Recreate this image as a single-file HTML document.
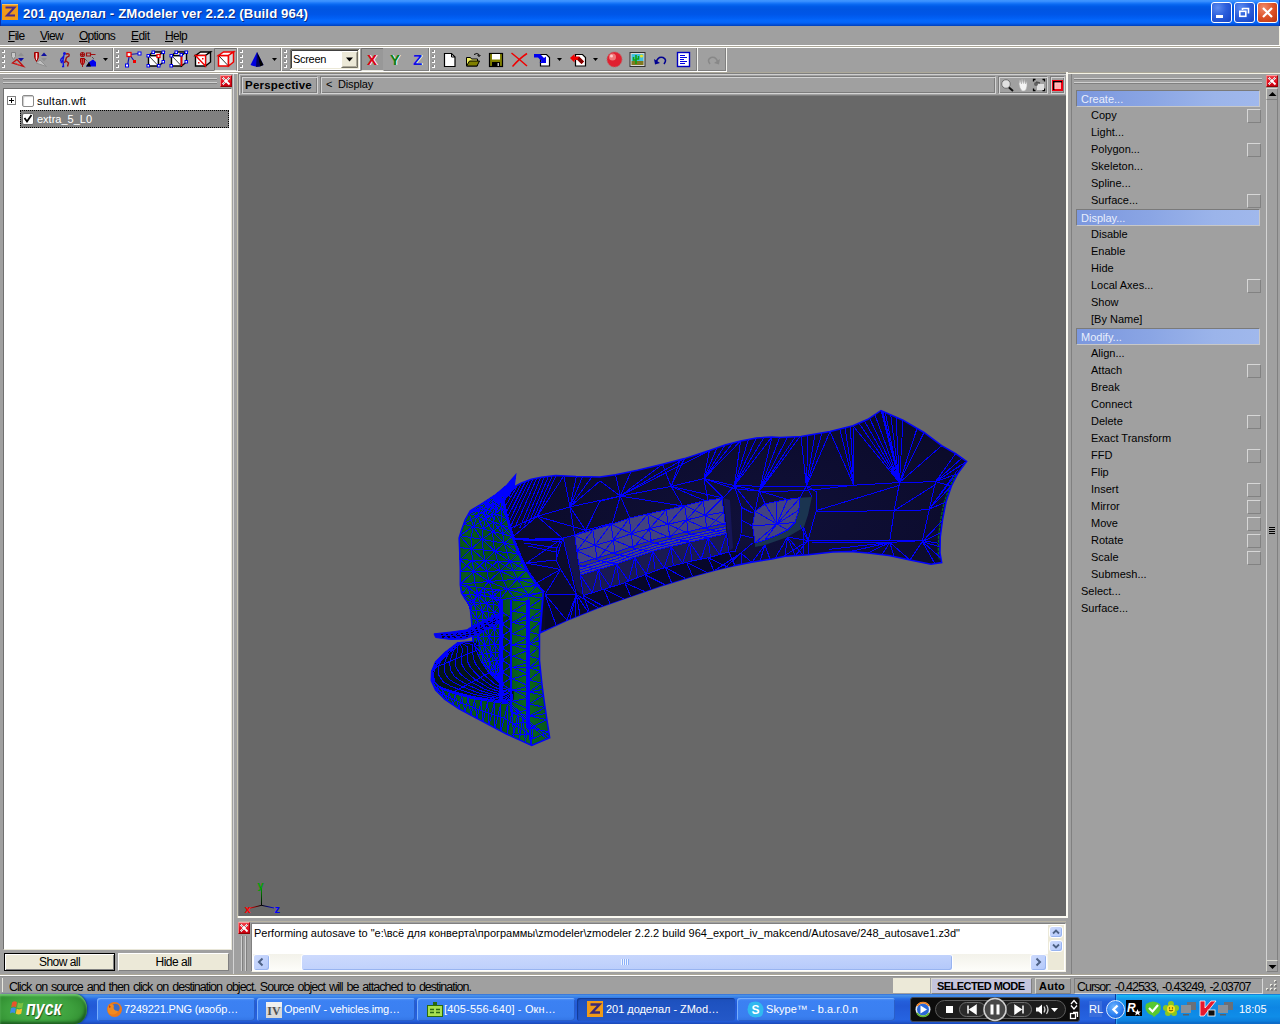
<!DOCTYPE html>
<html lang="ru">
<head>
<meta charset="utf-8">
<title>201 доделал - ZModeler ver 2.2.2 (Build 964)</title>
<style>
*{box-sizing:border-box;margin:0;padding:0}
html,body{width:1280px;height:1024px;overflow:hidden;background:#a0a0a0}
body{position:relative;font-family:"Liberation Sans","DejaVu Sans",sans-serif;font-size:11px;color:#000}
.abs,.a{position:absolute}
.a{display:block}
#titlebar{left:0;top:0;width:1280px;height:26px;border-left:1px solid #0a2fa8;border-right:1px solid #0a2fa8;background:linear-gradient(to bottom,#3f96ff 0%,#3a90ff 5%,#1d7afa 11%,#0766f0 18%,#0059e6 26%,#0055e2 36%,#0056e8 55%,#015ef3 68%,#0468fd 80%,#0463f6 88%,#0150da 94%,#0040b8 100%)}
#titletext{left:23px;top:5px;color:#fff;font-weight:bold;font-size:13.2px;text-shadow:1px 1px 0 #0a2a80;white-space:nowrap;line-height:17px}
.tbtn{position:absolute;top:2px;width:21px;height:21px;border:1px solid #fff;border-radius:3px;background:radial-gradient(circle at 30% 25%,#5d8cf0 0%,#2c5fdc 45%,#1442c4 100%)}
.tbtn.close{background:radial-gradient(circle at 30% 25%,#f08a6a 0%,#dd5227 50%,#b73311 100%)}
.menu{position:absolute;top:29px;font-size:12px;line-height:14px;white-space:nowrap}
.hl{position:absolute;height:1px;left:0;width:1280px}
.grip{position:absolute;width:3px;height:22px;top:49px}
.grip i{position:absolute;left:0;width:2px;height:2px;background:#e8e8e0;box-shadow:1px 1px 0 #707070}
.tsep{position:absolute;top:48px;width:2px;height:24px;border-left:1px solid #808080;border-right:1px solid #e0e0d8}
.sunk{border:1px solid;border-color:#808080 #d8d8d0 #d8d8d0 #808080}
.etch{border:1px solid;border-color:#7c7c7c #d4d4d4 #d4d4d4 #7c7c7c;box-shadow:inset 1px 1px 0 #d4d4d4, inset -1px -1px 0 #7c7c7c}
.rais{border:1px solid;border-color:#d8d8d0 #808080 #808080 #d8d8d0}
.t11{font-size:11px;line-height:13px;white-space:nowrap}
.t12{font-size:12px;line-height:14px;white-space:nowrap}
.xbtn{position:absolute;width:12px;height:12px;background:linear-gradient(to bottom,#f04048 0%,#e41020 55%,#c80010 100%);border:1px solid;border-color:#f8a0a0 #a00008 #900000 #f08080}
.cmdhead{position:absolute;left:1076px;width:184px;height:17px;padding-top:1px;border:1px solid;border-color:#7a7a7a #c8c8c8 #c8c8c8 #7a7a7a;background:linear-gradient(to right,#7b97de 0%,#8aa5e4 40%,#9bb4ea 75%,#a0b8ec 100%);color:#e8eefc;font-size:11px;line-height:14px;padding-left:4px}
.cmd{position:absolute;left:1091px;font-size:11px;line-height:13px;white-space:nowrap}
.cbox{position:absolute;left:1247px;width:14px;height:14px;border:1px solid;border-color:#d6d6d6 #828282 #828282 #d6d6d6}
.task{position:absolute;top:998px;height:23px;border-radius:3px;background:linear-gradient(to bottom,#5a9af8 0%,#3c81f3 12%,#3a7ff0 80%,#3374e4 100%);box-shadow:inset 1px 1px 0 #78aefc, inset -1px -1px 0 #2a5fc8;color:#fff;font-size:11px;line-height:23px;white-space:nowrap;overflow:hidden}
.task span{position:absolute;left:27px;top:0}
.task.active{background:linear-gradient(to bottom,#1c4fb8 0%,#1e52c0 20%,#2458c8 100%);box-shadow:inset 1px 1px 1px #123a94}
.sbtn{border:1px solid #fff;border-radius:3px;background:linear-gradient(to bottom right,#cddafd 0%,#c1d2fc 50%,#b3c8fa 100%);box-shadow:inset -1px -1px 0 #98b4f0}
/*FIT*/#titletext{letter-spacing:0.123px}#mFile{letter-spacing:-0.715px}#mView{letter-spacing:-0.703px}#mOptions{letter-spacing:-0.768px}#mEdit{letter-spacing:-0.551px}#mHelp{letter-spacing:-0.672px}#sultan{letter-spacing:0.253px}#extra{letter-spacing:-0.005px}#showall{letter-spacing:-0.545px}#hideall{letter-spacing:-0.504px}#persp{letter-spacing:0.220px}#disp{letter-spacing:-0.161px}#screen{letter-spacing:-0.310px}#msg{letter-spacing:-0.006px}#stat{letter-spacing:-0.983px}#selmode{letter-spacing:-0.556px}#auto{letter-spacing:0.238px}#cursor{letter-spacing:-1.039px}#tk1{letter-spacing:-0.160px}#tk2{letter-spacing:-0.119px}#tk3{letter-spacing:0.164px}#tk4{letter-spacing:-0.039px}#tk5{letter-spacing:0.049px}#clock{letter-spacing:-0.006px}/*ENDFIT*/
</style>
</head>
<body>
<div id="titlebar" class="abs"></div>
<div id="titletext" class="abs">201 доделал - ZModeler ver 2.2.2 (Build 964)</div>
<!-- app icon -->
<svg class="a" style="left:2px;top:4px" width="17" height="17" viewBox="0 0 17 17"><rect x="0" y="0" width="16" height="16" fill="#f09a18"/><rect x="0" y="0" width="16" height="1" fill="#f8c060"/><path d="M3.5 3.5 H12.5 L5 11.5 H13" fill="none" stroke="#4a2a88" stroke-width="2"/></svg>
<!-- title buttons -->
<div class="tbtn" style="left:1211px"><svg class="a" style="left:0;top:0" width="19" height="19"><rect x="4" y="12" width="7" height="3" fill="#fff"/></svg></div>
<div class="tbtn" style="left:1234px"><svg class="a" style="left:0;top:0" width="19" height="19"><path d="M7.5 5.5 H13.5 V10.5 M7.5 5 V7" fill="none" stroke="#fff" stroke-width="1.6"/><rect x="4.8" y="8.3" width="6" height="5" fill="none" stroke="#fff" stroke-width="1.6"/></svg></div>
<div class="tbtn close" style="left:1257px"><svg class="a" style="left:0;top:0" width="19" height="19"><path d="M5 5 L14 14 M14 5 L5 14" stroke="#fff" stroke-width="2.2" fill="none"/></svg></div>
<!-- window right border -->
<div class="a" style="left:1279px;top:26px;width:1px;height:19px;background:#f4f2e4"></div>
<!-- menu -->
<div class="menu" id="mFile" style="left:8px"><u>F</u>ile</div>
<div class="menu" id="mView" style="left:40px"><u>V</u>iew</div>
<div class="menu" id="mOptions" style="left:79px"><u>O</u>ptions</div>
<div class="menu" id="mEdit" style="left:131px"><u>E</u>dit</div>
<div class="menu" id="mHelp" style="left:165px"><u>H</u>elp</div>
<!-- toolbar separators -->
<div class="hl" style="top:45px;background:#fff"></div>
<div class="hl" style="top:46px;background:#aca899"></div>
<div class="hl" style="top:47px;background:#fff"></div>
<div class="hl" style="top:70px;width:726px;background:#808080"></div>
<div class="hl" style="top:71px;width:727px;background:#fff"></div>
<div class="hl" style="top:72px;background:#aca899"></div>
<div class="hl" style="top:73px;background:#fff"></div>
<!-- toolbar -->
<svg class="a" style="left:0;top:47px" width="760" height="25" viewBox="0 47 760 25" shape-rendering="crispEdges">
<rect x="2" y="50" width="3" height="3" fill="#ffffff"/><rect x="2" y="50" width="2" height="2" fill="#8c8c8c"/><rect x="2" y="55" width="3" height="3" fill="#ffffff"/><rect x="2" y="55" width="2" height="2" fill="#8c8c8c"/><rect x="2" y="60" width="3" height="3" fill="#ffffff"/><rect x="2" y="60" width="2" height="2" fill="#8c8c8c"/><rect x="2" y="65" width="3" height="3" fill="#ffffff"/><rect x="2" y="65" width="2" height="2" fill="#8c8c8c"/>
<rect x="116" y="50" width="3" height="3" fill="#ffffff"/><rect x="116" y="50" width="2" height="2" fill="#8c8c8c"/><rect x="116" y="55" width="3" height="3" fill="#ffffff"/><rect x="116" y="55" width="2" height="2" fill="#8c8c8c"/><rect x="116" y="60" width="3" height="3" fill="#ffffff"/><rect x="116" y="60" width="2" height="2" fill="#8c8c8c"/><rect x="116" y="65" width="3" height="3" fill="#ffffff"/><rect x="116" y="65" width="2" height="2" fill="#8c8c8c"/>
<rect x="240" y="50" width="3" height="3" fill="#ffffff"/><rect x="240" y="50" width="2" height="2" fill="#8c8c8c"/><rect x="240" y="55" width="3" height="3" fill="#ffffff"/><rect x="240" y="55" width="2" height="2" fill="#8c8c8c"/><rect x="240" y="60" width="3" height="3" fill="#ffffff"/><rect x="240" y="60" width="2" height="2" fill="#8c8c8c"/><rect x="240" y="65" width="3" height="3" fill="#ffffff"/><rect x="240" y="65" width="2" height="2" fill="#8c8c8c"/>
<rect x="284" y="50" width="3" height="3" fill="#ffffff"/><rect x="284" y="50" width="2" height="2" fill="#8c8c8c"/><rect x="284" y="55" width="3" height="3" fill="#ffffff"/><rect x="284" y="55" width="2" height="2" fill="#8c8c8c"/><rect x="284" y="60" width="3" height="3" fill="#ffffff"/><rect x="284" y="60" width="2" height="2" fill="#8c8c8c"/><rect x="284" y="65" width="3" height="3" fill="#ffffff"/><rect x="284" y="65" width="2" height="2" fill="#8c8c8c"/>
<rect x="432" y="50" width="3" height="3" fill="#ffffff"/><rect x="432" y="50" width="2" height="2" fill="#8c8c8c"/><rect x="432" y="55" width="3" height="3" fill="#ffffff"/><rect x="432" y="55" width="2" height="2" fill="#8c8c8c"/><rect x="432" y="60" width="3" height="3" fill="#ffffff"/><rect x="432" y="60" width="2" height="2" fill="#8c8c8c"/><rect x="432" y="65" width="3" height="3" fill="#ffffff"/><rect x="432" y="65" width="2" height="2" fill="#8c8c8c"/>
<rect x="112" y="48" width="1" height="22" fill="#808080"/><rect x="113" y="48" width="1" height="23" fill="#f4f4f0"/>
<rect x="236" y="48" width="1" height="22" fill="#808080"/><rect x="237" y="48" width="1" height="23" fill="#f4f4f0"/>
<rect x="280" y="48" width="1" height="22" fill="#808080"/><rect x="281" y="48" width="1" height="23" fill="#f4f4f0"/>
<rect x="428" y="48" width="1" height="22" fill="#808080"/><rect x="429" y="48" width="1" height="23" fill="#f4f4f0"/>
<rect x="696" y="48" width="1" height="22" fill="#808080"/><rect x="697" y="48" width="1" height="23" fill="#f4f4f0"/>
<rect x="725" y="48" width="1" height="22" fill="#808080"/><rect x="726" y="48" width="1" height="23" fill="#f4f4f0"/>
<path d="M103 58 h5 l-2.500 3z" fill="#000" shape-rendering="auto"/>
<path d="M272 58 h5 l-2.500 3z" fill="#000" shape-rendering="auto"/>
<path d="M557 58 h5 l-2.500 3z" fill="#000" shape-rendering="auto"/>
<path d="M593 58 h5 l-2.500 3z" fill="#000" shape-rendering="auto"/>
<g shape-rendering="auto">
<g><path d="M11.500 52.500 h4 v4 l-2 3 l-2 -3z" fill="#c8c8c8" stroke="#808080"/><path d="M18 56 l3 -3.500 l3 3.500z" fill="#909090"/><path d="M18 58 l3 3.500 l3 -3.500z" fill="#1010a0"/><path d="M12.500 63 L17 59.500 L23.500 66.500 Z" fill="none" stroke="#c01010" stroke-width="1.300"/><path d="M15 63 L20 65.500" stroke="#e03030" stroke-width="1"/></g>
<g><path d="M34.500 52.500 h4 v5 l-2 4 l-2 -4z" fill="#d04040" stroke="#a00000"/><path d="M36.500 53 v7" stroke="#fff" stroke-width="0.800"/><path d="M41 56 l3 -3.500 l3 3.500z" fill="#1010a0"/><path d="M41 58 l3 3.500 l3 -3.500z" fill="#909090"/><path d="M36 63 L40 60 L46.500 66.500 Z" fill="#c0c0c0" stroke="#909090"/></g>
<g fill="none"><circle cx="64.500" cy="53.500" r="1.500" fill="#1010e0"/><path d="M64 55 L63 60 L61 63 M63 60 L63.500 66.500 H62 M64 56 L61 59 L60.500 61.500" stroke="#1010e0" stroke-width="1.400"/><path d="M66 54 Q70 53 69 56 L66.500 57.500 L65.500 60.500 L68.500 63 L67.500 66.500 M65.500 60.500 L64.500 63" stroke="#a01010" stroke-width="1.400"/></g>
<g><circle cx="82.500" cy="54.500" r="2" fill="none" stroke="#a01010" stroke-width="1.200"/><path d="M80.500 54.500 h4 M82.500 52.500 v4" stroke="#a01010"/><path d="M86.500 53 h4 v3 h-4z M90.500 54.500 h5" fill="none" stroke="#a01010" stroke-width="1.200"/><path d="M80.500 58.500 h4 v4 l-2 3 l-2 -3z" fill="#d04040" stroke="#a00000"/><path d="M82.500 59 v8" stroke="#a01010"/><path d="M86 66.500 L89 62 L93 59.500 L96 62 V66.500Z" fill="#0000f0"/><path d="M86 66.500 L89 62 L91 66.500Z" fill="#000"/><path d="M85 59 L89 63 M92 57 L94 59" stroke="#303030" stroke-dasharray="1 1"/></g>
<g><path d="M127.500 65.500 L129.500 54.500 L139.500 53.500 M129.500 54.500 L134.500 61.500" fill="none" stroke="#1010b0" stroke-width="1.200"/><rect x="127" y="52.500" width="4" height="4" fill="#fff" stroke="#f00000" stroke-width="1.300"/><rect x="133" y="60" width="3" height="3" fill="#f00000"/><rect x="138" y="52" width="3" height="3" fill="#fff" stroke="#0000f0"/><rect x="125.500" y="64" width="3" height="3" fill="#fff" stroke="#0000f0"/></g>
<g><path d="M148.5 55.5 h10 v10.500 h-10z" fill="#fff" stroke="#000" stroke-width="1.4"/><path d="M148.5 55.5 l5 -3.500 h10 l-5 3.500z" fill="#fff" stroke="#000" stroke-width="1.4"/><path d="M158.5 55.5 l5 -3.500 v10 l-5 4z" fill="#d8d8d8" stroke="#000" stroke-width="1.4"/><path d="M149 56 L158 65.500" stroke="#404040"/><rect x="147" y="54.5" width="2.500" height="2.500" fill="#fff" stroke="#0000f0"/><rect x="152" y="51" width="2.500" height="2.500" fill="#fff" stroke="#0000f0"/><rect x="162" y="51" width="2.500" height="2.500" fill="#fff" stroke="#0000f0"/><rect x="162" y="60.5" width="2.500" height="2.500" fill="#fff" stroke="#0000f0"/><rect x="157.5" y="64.5" width="2.500" height="2.500" fill="#fff" stroke="#0000f0"/><rect x="147" y="64.5" width="2.500" height="2.500" fill="#fff" stroke="#0000f0"/><rect x="157" y="54.500" width="3" height="3" fill="#fff" stroke="#f00000" stroke-width="1.300"/></g>
<g><path d="M171.5 55.5 h10 v10.500 h-10z" fill="#fff" stroke="#000" stroke-width="1.4"/><path d="M171.5 55.5 l5 -3.500 h10 l-5 3.500z" fill="#fff" stroke="#000" stroke-width="1.4"/><path d="M181.5 55.5 l5 -3.500 v10 l-5 4z" fill="#d8d8d8" stroke="#000" stroke-width="1.4"/><path d="M172 56 L181 65.500" stroke="#404040"/><path d="M181.500 55 V66" stroke="#f00000" stroke-width="1.600"/><rect x="170" y="54.5" width="2.500" height="2.500" fill="#fff" stroke="#0000f0"/><rect x="175" y="51" width="2.500" height="2.500" fill="#fff" stroke="#0000f0"/><rect x="185" y="51" width="2.500" height="2.500" fill="#fff" stroke="#0000f0"/><rect x="185" y="60.5" width="2.500" height="2.500" fill="#fff" stroke="#0000f0"/><rect x="170" y="64.5" width="2.500" height="2.500" fill="#fff" stroke="#0000f0"/><rect x="180" y="53.5" width="2.500" height="2.500" fill="#fff" stroke="#0000f0"/></g>
<g><path d="M195.5 55.5 h10 v10.500 h-10z" fill="#fff" stroke="#000" stroke-width="1.4"/><path d="M195.5 55.5 l5 -3.500 h10 l-5 3.500z" fill="#fff" stroke="#000" stroke-width="1.4"/><path d="M205.5 55.5 l5 -3.500 v10 l-5 4z" fill="#d8d8d8" stroke="#000" stroke-width="1.4"/><path d="M195.500 55.500 L205.500 66 V55.500 Z" fill="#fff" stroke="#f00000" stroke-width="1.300"/><rect x="198" y="62" width="1.500" height="1.500" fill="#f00000"/><rect x="202" y="58" width="1.500" height="1.500" fill="#f00000"/></g>
<rect x="214" y="48" width="22" height="22" fill="#a6a6a6"/><path d="M214.500 70 V48.500 H236" fill="none" stroke="#707070"/><path d="M214.500 70.500 H236.500" fill="none" stroke="#e8e8e0"/>
<g><path d="M218.5 55.5 h10 v10.500 h-10z" fill="#fff" stroke="#f00000" stroke-width="1.5"/><path d="M218.5 55.5 l5 -3.500 h10 l-5 3.500z" fill="#fff" stroke="#f00000" stroke-width="1.5"/><path d="M228.5 55.5 l5 -3.500 v10 l-5 4z" fill="#d8d8d8" stroke="#f00000" stroke-width="1.5"/><path d="M219 56 L228 65.500" stroke="#303030"/></g>
<g><path d="M257 52 L263.500 65 Q257 68 250.500 65Z" fill="#0000e0"/><path d="M257 52 L260 66.500 L256 67Z" fill="#000060"/><path d="M257 52 L263.500 65 L260 66.500Z" fill="#000"/></g>
<rect x="290" y="49" width="70" height="21" fill="#fff"/><path d="M290.500 69 V49.500 H359" fill="none" stroke="#716f64"/><path d="M291.500 68 V50.500 H358" fill="none" stroke="#404040"/><path d="M290.500 69.500 H359.500 V49.500" fill="none" stroke="#fff"/><path d="M291.500 68.500 H358.500 V50.500" fill="none" stroke="#ece9d8"/><rect x="341" y="51" width="17" height="17" fill="#ece9d8"/><path d="M341.500 67 V51.500 H357" fill="none" stroke="#fff"/><path d="M341.500 67.500 H357.500 V51.500" fill="none" stroke="#716f64"/><path d="M342.500 66.500 H356.500 V52.500" fill="none" stroke="#aca899"/><path d="M346 57.500 h7 l-3.500 4z" fill="#000"/>
<rect x="361" y="48" width="22" height="22" fill="#989898"/><path d="M361.500 70 V48.500 H383" fill="none" stroke="#707070"/><path d="M361.500 70.500 H383.500" fill="none" stroke="#e8e8e0"/>
</g></svg>
<div class="a t11" id="screen" style="left:293px;top:53px">Screen</div>
<div class="a" style="left:367px;top:51px;font-size:15px;font-weight:bold;line-height:17px;color:#e00010;text-shadow:1px 0 0 #fff">X</div>
<div class="a" style="left:390px;top:51px;font-size:15px;font-weight:bold;line-height:17px;color:#108010;text-shadow:1px 0 0 #fff">Y</div>
<div class="a" style="left:413px;top:51px;font-size:15px;font-weight:bold;line-height:17px;color:#1010e0;text-shadow:1px 0 0 #fff">Z</div>
<svg class="a" style="left:436px;top:47px" width="300" height="25" viewBox="436 47 300 25">
<path d="M444.500 53.500 h7 l3.500 3.500 v9.500 h-10.500z" fill="#fff" stroke="#000" stroke-width="1.200"/><path d="M451.500 53.500 v3.500 h3.500" fill="none" stroke="#000"/>
<path d="M466.500 57.500 h4 l1 1.500 h6 v7 h-11z" fill="#f0f060" stroke="#000"/><path d="M466.500 66 l3 -5 h10 l-2.500 5z" fill="#808000" stroke="#000"/><path d="M474 54.500 q3 -2 5 0 l0 2 m0 0 l-1.500 -1.500 m1.500 1.500 l1.500 -1.500" fill="none" stroke="#000"/>
<rect x="489.500" y="53.500" width="13" height="13" fill="#808000" stroke="#000" stroke-width="1.200"/><rect x="492" y="54" width="8" height="5.500" fill="#fff"/><rect x="492" y="62" width="8" height="4.500" fill="#000"/><rect x="497.500" y="63" width="1.500" height="3" fill="#c0c0c0"/>
<path d="M511.500 53 Q519 59 527 66 M527 53.500 Q520 58 512.500 66.500" fill="none" stroke="#f00000" stroke-width="1.500"/>
<path d="M540.500 54.500 h6 l3 3 v8.500 h-9z" fill="#fff" stroke="#000" stroke-width="1.200"/><path d="M534 54 h6 l4 4 l2 -1.500 v6.500 h-6.500 l2 -2 l-3.500 -3.500 h-4z" fill="#0000f0"/>
<path d="M575.500 54.500 h7 l3 3 v8.500 h-10z" fill="#fff" stroke="#000" stroke-width="1.200"/><path d="M570 58 l4.500 -4 v2.500 h4.500 l5 5 l-2.500 2.500 l-4 -4 h-3 v2.500z" fill="#f00000"/><path d="M579 56.500 l5 5 l-2.500 2.500 l-4 -4z" fill="#800000"/>
<circle cx="614.500" cy="59.500" r="7.500" fill="#e02030"/><circle cx="614.500" cy="59.500" r="7.500" fill="none" stroke="#c06060" stroke-width="1" stroke-dasharray="1 1"/><circle cx="612.500" cy="57" r="3.500" fill="#f07878"/><circle cx="611.500" cy="56" r="1.500" fill="#ffc8c8"/>
<rect x="630" y="52.500" width="15" height="14" fill="#d8d8d8" stroke="#303030"/><rect x="631.500" y="54" width="12" height="7" fill="#40c0e0"/><rect x="631.500" y="61" width="12" height="4" fill="#807820"/><path d="M636 55 v9 M633.500 57 v3 h2.500 M638.500 56 v3 h-2.500" stroke="#10a010" stroke-width="1.600" fill="none"/><circle cx="641.500" cy="56" r="1.600" fill="#f0e020"/>
<path d="M656 62.500 Q658 56 663 57.500 Q667.500 59.500 664 64" fill="none" stroke="#000090" stroke-width="1.600"/><path d="M654 59 l1 5.500 l5 -1.500z" fill="#000090"/>
<rect x="677.500" y="52.500" width="12" height="14" fill="#fff" stroke="#0000c0" stroke-width="1.400"/><path d="M680 55.500 h5 M680 57.500 h7 M680 59.500 h4 M680 61.500 h7 M680 63.500 h5" stroke="#0000e0" stroke-width="1"/>
<path d="M718 62.500 Q716 56 711 57.500 Q706.500 59.500 710 64" fill="none" stroke="#888888" stroke-width="1.600"/><path d="M720 59 l-1 5.500 l-5 -1.500z" fill="#888888"/>
</svg>
<!-- left objects panel -->
<div class="a" style="left:3px;top:78px;width:214px;height:2px;border-top:1px solid #d0d0d0;border-bottom:1px solid #808080"></div>
<div class="a" style="left:3px;top:82px;width:214px;height:2px;border-top:1px solid #d0d0d0;border-bottom:1px solid #808080"></div>
<div class="xbtn" style="left:220px;top:75px"><svg class="a" style="left:0;top:0" width="10" height="10"><path d="M1.5 1.5 L8.5 8.5" stroke="#fff" stroke-width="1.8"/><path d="M8.5 1.500 L1.500 8.500" stroke="#fff" stroke-width="1.800"/><path d="M1.500 1.500 l2 2 M8.500 1.500 l-2 2 M1.500 8.500 l2 -2" stroke="#200000" stroke-width="1" stroke-dasharray="1 1"/></svg></div>
<div class="a" style="left:3px;top:88px;width:229px;height:862px;background:#fff;border:1px solid;border-color:#707070 #e8e6d8 #e8e6d8 #707070"></div>
<!-- tree -->
<div class="a" style="left:7px;top:96px;width:9px;height:9px;border:1px solid #808080;background:#fff"><div class="a" style="left:1px;top:3px;width:5px;height:1px;background:#000"></div><div class="a" style="left:3px;top:1px;width:1px;height:5px;background:#000"></div></div>
<div class="a" style="left:22px;top:95px;width:12px;height:12px;background:#fff;border:1px solid #8a8a8a;border-radius:2px;box-shadow:inset 1px 1px 1px #c8c8c8"></div>
<div class="a t11" id="sultan" style="left:37px;top:95px">sultan.wft</div>
<div class="a" style="left:20px;top:110px;width:209px;height:18px;background:#808080;outline:1px dotted #000;outline-offset:-1px"></div>
<div class="a" style="left:22px;top:113px;width:12px;height:12px;background:#fff;border:1px solid #6a6a6a;border-radius:2px"><svg class="a" style="left:0;top:0" width="10" height="10"><path d="M1.5 4 L4 7.5 L8.5 1" fill="none" stroke="#000" stroke-width="1.8"/></svg></div>
<div class="a t11" id="extra" style="left:37px;top:113px;color:#fff">extra_5_L0</div>
<!-- buttons -->
<div class="a t12" style="left:4px;top:953px;width:111px;height:18px;background:#ece9d8;border:1px solid #000;box-shadow:inset 1px 1px 0 #fff, inset -1px -1px 0 #808080;text-align:center;line-height:16px"><span id="showall">Show all</span></div>
<div class="a t12" style="left:118px;top:953px;width:111px;height:18px;background:#ece9d8;border:1px solid;border-color:#fff #808080 #808080 #fff;text-align:center;line-height:16px"><span id="hideall">Hide all</span></div>
<!-- splitter left/viewport -->
<div class="a" style="left:233px;top:74px;width:1px;height:900px;background:#d4d4d4"></div>
<div class="a" style="left:237px;top:74px;width:1px;height:844px;background:#c8c4b0"></div>
<div class="a" style="left:238px;top:74px;width:1px;height:842px;background:#808080"></div>
<!-- viewport header -->
<div class="a" style="left:238px;top:73px;width:828px;height:1px;background:#808080"></div>
<div class="a" style="left:239px;top:74px;width:827px;height:1px;background:#d0d0d0"></div>
<div class="a" style="left:239px;top:75px;width:1px;height:20px;background:#d0d0d0"></div>
<div class="a etch" style="left:241px;top:76px;width:77px;height:18px"></div>
<div class="a" id="persp" style="left:245px;top:78px;font-size:11.5px;font-weight:bold;line-height:14px;white-space:nowrap">Perspective</div>
<div class="a etch" style="left:320px;top:76px;width:676px;height:18px"></div>
<div class="a t11" id="disp" style="left:326px;top:78px">&lt;&nbsp; Display</div>
<div class="a etch" style="left:998px;top:76px;width:50px;height:18px"></div>
<div class="a etch" style="left:1050px;top:76px;width:15px;height:18px"></div>
<!-- viewport -->
<div class="a" style="left:239px;top:95px;width:827px;height:1px;background:#808080"></div>
<div class="a" style="left:239px;top:96px;width:827px;height:820px;background:#686868"></div>
<div class="a" style="left:238px;top:916px;width:830px;height:2px;background:#fbfaf2"></div>
<svg class="a" style="left:998px;top:76px" width="68" height="18" viewBox="998 76 68 18">
<circle cx="1006" cy="84" r="4.300" fill="#e0e0e0" stroke="#707070" stroke-width="1"/><path d="M1009 87.500 L1013 91" stroke="#101010" stroke-width="2"/>
<path d="M1019 84 L1020 80 L1021.500 84 L1022 79 L1023.500 83.500 L1024.500 79.500 L1025.500 84 L1027 81.500 L1027 86 Q1026.500 90 1024.500 91 H1022 Q1019.500 88 1019 84Z" fill="#f4f4f4" stroke="#b0b0b0" stroke-width="0.600"/>
<path d="M1033.500 81.500 V79.500 H1035.500 M1042.500 79.500 H1044.500 V81.500 M1044.500 88.500 V90.500 H1042.500 M1035.500 90.500 H1033.500 V88.500" fill="none" stroke="#000" stroke-width="1.300"/><rect x="1037" y="84" width="7" height="6" fill="#e0e0e0"/><circle cx="1036" cy="84" r="2" fill="#606060"/><path d="M1036 82 L1040 83" stroke="#505050" stroke-width="1.500"/>
<rect x="1052" y="80" width="11" height="11" fill="#f00010"/><rect x="1053" y="81" width="9" height="1.500" fill="#000"/><rect x="1053" y="81" width="1.500" height="9" fill="#000"/><rect x="1054.500" y="82.500" width="6.500" height="6.500" fill="#ffc8c8"/><rect x="1055.500" y="83.500" width="5.500" height="5.500" fill="#ffa0a0" opacity="0.600"/>
</svg>
<!-- axis gizmo -->
<svg class="a" style="left:240px;top:876px" width="50" height="40" viewBox="240 876 50 40">
<defs><linearGradient id="gy" x1="0" y1="1" x2="0" y2="0"><stop offset="0" stop-color="#000"/><stop offset="1" stop-color="#00a000"/></linearGradient>
<linearGradient id="gx" x1="1" y1="0" x2="0" y2="0"><stop offset="0" stop-color="#000"/><stop offset="1" stop-color="#f00000"/></linearGradient>
<linearGradient id="gz" x1="0" y1="0" x2="1" y2="0"><stop offset="0" stop-color="#000"/><stop offset="1" stop-color="#0000f0"/></linearGradient></defs>
<rect x="261" y="888" width="1" height="17.500" fill="url(#gy)"/>
<path d="M261.500 905.300 L250 908.200" stroke="url(#gx)" stroke-width="1"/>
<path d="M261.500 905.300 L274 908" stroke="url(#gz)" stroke-width="1"/>
<text x="257.500" y="889" font-family="Liberation Sans,sans-serif" font-size="11" font-weight="bold" fill="#00a000">y</text>
<text x="244.500" y="913" font-family="Liberation Sans,sans-serif" font-size="11" font-weight="bold" fill="#ff0000">x</text>
<text x="274.500" y="913" font-family="Liberation Sans,sans-serif" font-size="11" font-weight="bold" fill="#0000ff">z</text>
</svg>
<svg class="a" style="left:239px;top:96px" width="827" height="820" viewBox="239 96 827 820">
<defs><linearGradient id="gg" x1="0" y1="0" x2="1" y2="0"><stop offset="0" stop-color="#053c18"/><stop offset="0.3" stop-color="#095a1e"/><stop offset="0.55" stop-color="#06481a"/><stop offset="0.8" stop-color="#0a6620"/><stop offset="1" stop-color="#08541c"/></linearGradient><radialGradient id="nv" cx="0.55" cy="0.5" r="0.6"><stop offset="0" stop-color="#10103a"/><stop offset="1" stop-color="#0a0a28"/></radialGradient></defs>
<polygon points="515.5,475.2 506.9,485.3 494.7,495.5 480.5,504.6 470.3,510.7 465.2,519.8 461.2,531.0 459.1,538.1 459.8,553.8 460.3,569.4 460.3,585.0 461.4,592.8 465.3,599.0 470.0,605.6 471.6,621.3 473.0,641.6 457.5,643.0 445.0,652.5 435.6,661.9 431.7,671.3 431.3,680.6 435.6,690.0 445.0,699.4 459.0,708.8 482.5,721.3 506.0,733.8 531.7,745.5 549.7,737.7 545.0,707.0 541.9,683.8 539.5,660.3 539.5,632.0 543.4,592.0 535.6,583.4 526.0,569.4 520.0,556.9 513.8,541.3 509.0,525.6 505.0,511.6 502.8,499.0 514.0,487.0" fill="url(#gg)" stroke="#0000ff" stroke-width="1.5" />
<polygon points="514.0,487.0 521.0,483.3 531.3,479.2 541.4,477.2 555.6,475.5 576.0,476.5 600.0,477.0 615.6,474.7 637.5,470.3 662.5,464.2 684.4,458.6 709.4,450.5 725.0,445.0 740.6,441.0 756.3,438.0 771.9,436.9 780.0,437.4 801.0,436.6 830.0,431.6 853.0,425.8 867.9,419.3 881.0,410.5 903.0,420.2 924.0,432.5 941.7,445.7 955.7,453.6 966.6,461.5 957.5,473.8 951.4,486.0 946.0,502.0 942.6,519.5 940.3,537.0 940.0,553.0 941.7,562.6 931.0,564.3 910.0,560.0 889.0,555.5 867.9,553.0 850.3,551.5 832.7,552.0 808.0,554.7 785.0,556.3 771.9,559.0 751.6,562.2 732.8,566.0 715.6,570.0 691.9,576.6 660.6,586.0 629.4,596.9 598.0,607.8 566.9,620.3 540.3,632.8 543.4,592.0 535.6,583.4 526.0,569.4 520.0,556.9 513.8,541.3 509.0,525.6 505.0,511.6 502.8,499.0" fill="url(#nv)" stroke="#0000ff" stroke-width="1.5" />
<polygon points="477.8,641.6 479.4,658.8 488.8,672.8 499.7,683.8 513.8,690.0 513.8,699.4 507.5,701.7 490.3,699.4 471.6,696.3 451.3,690.8 440.3,686.9 433.3,680.6 431.7,671.3 435.6,661.9 445.0,652.5 457.5,643.0" fill="#03141c" />
<polygon points="502.5,617.0 510.5,615.0 510.5,690.0 512.0,699.0 502.5,686.0" fill="#053416" />
<polygon points="583.2,595.5 620.0,584.4 660.6,568.8 691.9,561.0 709.4,557.5 728.8,551.9 741.0,553.0 732.8,566.0 715.6,570.0 691.9,576.6 660.6,586.0 629.4,596.9 598.0,607.8 566.9,620.3 545.0,630.0 545.0,594.4 576.3,594.4" fill="#07072a" />
<polygon points="574.7,535.2 580.8,533.4 586.9,531.6 592.9,529.9 599.0,528.1 605.1,526.2 611.1,524.2 617.1,522.2 623.1,520.3 629.2,518.3 635.3,516.7 641.5,515.3 647.7,513.9 653.8,512.6 660.0,511.2 666.2,509.8 672.4,508.4 678.6,507.0 684.7,505.5 690.9,504.0 697.0,502.4 703.2,500.9 709.4,499.9 715.7,499.1 722.0,498.3 728.8,551.9 722.7,553.7 716.6,555.4 710.5,557.2 704.3,558.5 698.1,559.8 691.9,561.0 685.7,562.5 679.6,564.1 673.4,565.6 667.3,567.1 661.1,568.7 655.2,570.9 649.2,573.2 643.3,575.4 637.4,577.7 631.5,580.0 625.6,582.3 619.6,584.5 613.6,586.3 607.5,588.2 601.4,590.0 595.3,591.8 589.3,593.7 583.2,595.5" fill="#1a1a52" />
<polygon points="574.7,535.2 580.8,533.4 586.9,531.6 592.9,529.9 599.0,528.1 605.1,526.2 611.1,524.2 617.1,522.2 623.1,520.3 629.2,518.3 635.3,516.7 641.5,515.3 647.7,513.9 653.8,512.6 660.0,511.2 666.2,509.8 672.4,508.4 678.6,507.0 684.7,505.5 690.9,504.0 697.0,502.4 703.2,500.9 709.4,499.9 715.7,499.1 722.0,498.3 726.5,533.7 720.3,535.1 714.2,536.5 708.0,538.0 701.8,539.4 695.6,540.8 689.5,542.1 683.3,543.6 677.1,545.1 671.0,546.6 664.8,548.1 658.6,549.6 652.6,551.5 646.6,553.5 640.6,555.5 634.6,557.5 628.6,559.7 622.7,561.8 616.7,564.0 610.7,565.9 604.6,567.7 598.5,569.6 592.5,571.4 586.4,573.2 580.3,575.0" fill="#424282" />
<polygon points="578.7,563.5 584.8,561.7 590.9,559.9 596.9,558.1 603.0,556.3 609.1,554.4 615.1,552.5 621.1,550.4 627.1,548.3 633.0,546.2 639.1,544.3 645.1,542.5 651.2,540.7 657.3,538.9 663.4,537.5 669.6,536.0 675.8,534.5 681.9,533.1 688.1,531.6 694.3,530.2 700.5,528.8 706.6,527.3 712.8,526.0 719.0,524.7 725.2,523.5 725.6,526.7 719.4,528.0 713.2,529.3 707.1,530.7 700.9,532.2 694.7,533.5 688.5,534.9 682.4,536.4 676.2,537.9 670.0,539.4 663.9,540.8 657.7,542.3 651.6,544.1 645.6,546.0 639.6,547.8 633.5,549.8 627.6,551.9 621.6,554.0 615.6,556.2 609.6,558.1 603.5,559.9 597.4,561.7 591.4,563.5 585.3,565.4 579.2,567.2" fill="#37376f" />
<polygon points="563.0,538.3 574.7,535.2 582.5,595.3 576.5,590.0" fill="#14144a" />
<polygon points="723.4,498.0 730.0,500.0 733.0,548.0 729.7,551.0" fill="#161658" />
<polygon points="755.0,511.3 765.0,503.8 787.5,499.4 800.0,497.8 798.8,510.0 795.0,522.5 787.5,530.0 777.5,535.0 765.0,540.0 755.0,543.0 752.5,526.0" fill="#424282" />
<polygon points="800.0,497.8 811.9,497.0 808.0,515.0 803.8,527.5 787.5,537.0 765.0,545.0 755.0,547.0 755.0,543.0 765.0,540.0 777.5,535.0 787.5,530.0 795.0,522.5 798.8,510.0" fill="#1a3450" />
<polyline points="955.7,474.5 949.5,487.0 944.0,503.0 940.6,520.0 938.5,537.0 938.3,553.0 939.5,560.0" fill="none" stroke="#0a6a20" stroke-width="1.3" stroke-dasharray="3 1"/>
<g stroke="#0000ff" stroke-width="1" shape-rendering="crispEdges">
<line x1="620.3" y1="496.1" x2="615.6" y2="474.7"/>
<line x1="620.3" y1="496.1" x2="631.0" y2="471.6"/>
<line x1="620.3" y1="496.1" x2="662.5" y2="464.2"/>
<line x1="620.3" y1="496.1" x2="684.4" y2="458.6"/>
<line x1="620.3" y1="496.1" x2="709.4" y2="450.5"/>
<line x1="620.3" y1="496.1" x2="600.0" y2="481.0"/>
<line x1="620.3" y1="496.1" x2="600.0" y2="501.3"/>
<line x1="620.3" y1="496.1" x2="612.5" y2="523.0"/>
<line x1="620.3" y1="496.1" x2="629.7" y2="517.7"/>
<line x1="620.3" y1="496.1" x2="682.8" y2="506.0"/>
<line x1="620.3" y1="496.1" x2="671.1" y2="486.4"/>
<line x1="620.3" y1="496.1" x2="570.0" y2="506.9"/>
<line x1="600.0" y1="481.0" x2="570.0" y2="506.9"/>
<line x1="600.0" y1="501.3" x2="585.6" y2="530.3"/>
<line x1="570.0" y1="506.9" x2="585.6" y2="530.3"/>
<line x1="585.6" y1="530.3" x2="574.7" y2="535.2"/>
<line x1="612.5" y1="523.0" x2="600.0" y2="527.8"/>
<line x1="612.5" y1="523.0" x2="585.6" y2="530.3"/>
<line x1="671.1" y1="486.4" x2="684.4" y2="458.6"/>
<line x1="671.1" y1="486.4" x2="680.0" y2="459.7"/>
<line x1="671.1" y1="486.4" x2="682.8" y2="506.0"/>
<line x1="671.1" y1="486.4" x2="704.7" y2="500.5"/>
<line x1="671.1" y1="486.4" x2="723.4" y2="498.0"/>
<line x1="671.1" y1="486.4" x2="703.9" y2="478.6"/>
<line x1="671.1" y1="486.4" x2="662.5" y2="464.2"/>
<line x1="703.9" y1="478.6" x2="709.4" y2="450.5"/>
<line x1="703.9" y1="478.6" x2="717.0" y2="447.8"/>
<line x1="703.9" y1="478.6" x2="725.0" y2="445.0"/>
<line x1="703.9" y1="478.6" x2="732.8" y2="443.0"/>
<line x1="703.9" y1="478.6" x2="740.6" y2="441.0"/>
<line x1="703.9" y1="478.6" x2="707.8" y2="499.7"/>
<line x1="703.9" y1="478.6" x2="734.4" y2="488.8"/>
<line x1="703.9" y1="478.6" x2="723.4" y2="498.0"/>
<line x1="734.4" y1="485.6" x2="740.6" y2="441.0"/>
<line x1="734.4" y1="485.6" x2="748.4" y2="439.5"/>
<line x1="734.4" y1="485.6" x2="756.3" y2="438.0"/>
<line x1="734.4" y1="485.6" x2="764.0" y2="437.5"/>
<line x1="734.4" y1="485.6" x2="771.9" y2="436.9"/>
<line x1="734.4" y1="485.6" x2="741.4" y2="507.5"/>
<line x1="734.4" y1="485.6" x2="723.4" y2="498.0"/>
<line x1="734.4" y1="485.6" x2="755.0" y2="511.3"/>
<line x1="734.4" y1="485.6" x2="703.9" y2="478.6"/>
<line x1="734.4" y1="485.6" x2="759.4" y2="491.1"/>
<line x1="759.4" y1="491.1" x2="771.9" y2="436.9"/>
<line x1="759.4" y1="491.1" x2="779.7" y2="437.4"/>
<line x1="759.4" y1="491.1" x2="787.5" y2="437.1"/>
<line x1="759.4" y1="491.1" x2="795.3" y2="436.8"/>
<line x1="759.4" y1="491.1" x2="800.0" y2="436.6"/>
<line x1="759.4" y1="491.1" x2="765.0" y2="503.8"/>
<line x1="759.4" y1="491.1" x2="755.0" y2="511.3"/>
<line x1="759.4" y1="491.1" x2="787.5" y2="499.4"/>
<line x1="806.4" y1="486.1" x2="801.0" y2="436.6"/>
<line x1="806.4" y1="486.1" x2="808.0" y2="435.4"/>
<line x1="806.4" y1="486.1" x2="815.0" y2="434.2"/>
<line x1="806.4" y1="486.1" x2="822.0" y2="433.0"/>
<line x1="806.4" y1="486.1" x2="830.0" y2="431.6"/>
<line x1="806.4" y1="486.1" x2="800.0" y2="497.8"/>
<line x1="806.4" y1="486.1" x2="811.9" y2="497.0"/>
<line x1="806.4" y1="486.1" x2="816.0" y2="491.4"/>
<line x1="853.8" y1="485.2" x2="830.0" y2="431.6"/>
<line x1="853.8" y1="485.2" x2="839.8" y2="429.1"/>
<line x1="853.8" y1="485.2" x2="845.0" y2="427.8"/>
<line x1="853.8" y1="485.2" x2="850.3" y2="426.5"/>
<line x1="853.8" y1="485.2" x2="853.0" y2="425.8"/>
<line x1="899.5" y1="482.6" x2="853.0" y2="425.8"/>
<line x1="899.5" y1="482.6" x2="859.0" y2="423.2"/>
<line x1="899.5" y1="482.6" x2="864.4" y2="420.8"/>
<line x1="899.5" y1="482.6" x2="869.6" y2="418.2"/>
<line x1="899.5" y1="482.6" x2="874.9" y2="414.6"/>
<line x1="899.5" y1="482.6" x2="881.0" y2="410.5"/>
<line x1="899.5" y1="482.6" x2="882.0" y2="411.5"/>
<line x1="899.5" y1="482.6" x2="883.0" y2="412.0"/>
<line x1="899.5" y1="482.6" x2="885.4" y2="413.2"/>
<line x1="899.5" y1="482.6" x2="890.7" y2="415.0"/>
<line x1="899.5" y1="482.6" x2="896.0" y2="417.6"/>
<line x1="899.5" y1="482.6" x2="903.0" y2="420.2"/>
<line x1="899.5" y1="482.6" x2="917.0" y2="428.4"/>
<line x1="899.5" y1="482.6" x2="924.0" y2="432.5"/>
<line x1="899.5" y1="482.6" x2="941.7" y2="445.7"/>
<line x1="935.5" y1="481.7" x2="966.6" y2="461.5"/>
<line x1="935.5" y1="481.7" x2="955.7" y2="453.6"/>
<line x1="935.5" y1="481.7" x2="962.0" y2="458.0"/>
<line x1="935.5" y1="481.7" x2="957.5" y2="473.8"/>
<line x1="935.5" y1="481.7" x2="951.4" y2="486.0"/>
<line x1="935.5" y1="481.7" x2="960.0" y2="466.0"/>
<line x1="734.4" y1="488.8" x2="759.4" y2="491.1"/>
<line x1="759.4" y1="491.1" x2="780.0" y2="491.4"/>
<line x1="780.0" y1="491.4" x2="816.0" y2="489.6"/>
<line x1="816.0" y1="489.6" x2="853.8" y2="485.2"/>
<line x1="853.8" y1="485.2" x2="899.5" y2="482.6"/>
<line x1="899.5" y1="482.6" x2="935.5" y2="481.7"/>
<line x1="734.4" y1="485.0" x2="770.0" y2="487.0"/>
<line x1="770.0" y1="487.0" x2="806.4" y2="486.1"/>
<line x1="806.4" y1="486.1" x2="853.8" y2="485.2"/>
<line x1="816.0" y1="491.4" x2="816.0" y2="511.6"/>
<line x1="816.0" y1="511.6" x2="808.0" y2="540.6"/>
<line x1="816.0" y1="511.6" x2="894.2" y2="510.7"/>
<line x1="894.2" y1="510.7" x2="929.4" y2="509.8"/>
<line x1="808.0" y1="540.6" x2="889.8" y2="540.6"/>
<line x1="889.8" y1="540.6" x2="922.4" y2="540.6"/>
<line x1="922.4" y1="540.6" x2="938.0" y2="543.2"/>
<line x1="899.5" y1="482.6" x2="894.2" y2="510.7"/>
<line x1="894.2" y1="510.7" x2="889.8" y2="540.6"/>
<line x1="935.5" y1="481.7" x2="929.4" y2="509.0"/>
<line x1="929.4" y1="509.0" x2="922.4" y2="540.6"/>
<line x1="816.0" y1="510.7" x2="899.5" y2="485.2"/>
<line x1="894.2" y1="510.7" x2="935.5" y2="484.4"/>
<line x1="889.8" y1="542.4" x2="811.6" y2="542.4"/>
<line x1="889.8" y1="542.4" x2="829.0" y2="549.4"/>
<line x1="889.8" y1="542.4" x2="850.3" y2="551.5"/>
<line x1="889.8" y1="542.4" x2="867.9" y2="553.0"/>
<line x1="889.8" y1="542.4" x2="882.0" y2="554.7"/>
<line x1="889.8" y1="542.4" x2="894.0" y2="556.6"/>
<line x1="889.8" y1="542.4" x2="910.0" y2="560.0"/>
<line x1="889.8" y1="542.4" x2="922.4" y2="540.6"/>
<line x1="922.4" y1="541.5" x2="910.0" y2="560.0"/>
<line x1="922.4" y1="541.5" x2="934.7" y2="563.4"/>
<line x1="922.4" y1="541.5" x2="940.8" y2="558.0"/>
<line x1="922.4" y1="541.5" x2="941.7" y2="521.3"/>
<line x1="922.4" y1="541.5" x2="940.5" y2="533.0"/>
<line x1="922.4" y1="541.5" x2="940.0" y2="547.0"/>
<line x1="929.4" y1="509.0" x2="957.5" y2="470.3"/>
<line x1="929.4" y1="509.0" x2="951.4" y2="486.0"/>
<line x1="929.4" y1="509.0" x2="946.0" y2="502.0"/>
<line x1="929.4" y1="509.0" x2="953.0" y2="478.0"/>
<line x1="808.0" y1="540.6" x2="783.5" y2="556.4"/>
<line x1="808.0" y1="540.6" x2="808.0" y2="554.7"/>
<line x1="808.0" y1="540.6" x2="795.0" y2="556.0"/>
<line x1="808.0" y1="540.6" x2="800.0" y2="524.7"/>
<line x1="808.0" y1="540.6" x2="816.0" y2="511.6"/>
<line x1="808.0" y1="540.6" x2="787.5" y2="537.0"/>
<line x1="777.0" y1="524.0" x2="755.0" y2="511.3"/>
<line x1="777.0" y1="524.0" x2="765.0" y2="503.8"/>
<line x1="777.0" y1="524.0" x2="776.0" y2="501.0"/>
<line x1="777.0" y1="524.0" x2="787.5" y2="499.4"/>
<line x1="777.0" y1="524.0" x2="800.0" y2="497.8"/>
<line x1="777.0" y1="524.0" x2="798.8" y2="510.0"/>
<line x1="777.0" y1="524.0" x2="795.0" y2="522.5"/>
<line x1="777.0" y1="524.0" x2="787.5" y2="530.0"/>
<line x1="777.0" y1="524.0" x2="765.0" y2="540.0"/>
<line x1="777.0" y1="524.0" x2="755.0" y2="543.0"/>
<line x1="777.0" y1="524.0" x2="752.5" y2="526.0"/>
<line x1="755.0" y1="511.3" x2="765.0" y2="503.8"/>
<line x1="765.0" y1="503.8" x2="787.5" y2="499.4"/>
<line x1="787.5" y1="499.4" x2="800.0" y2="497.8"/>
<line x1="800.0" y1="497.8" x2="798.8" y2="510.0"/>
<line x1="798.8" y1="510.0" x2="795.0" y2="522.5"/>
<line x1="795.0" y1="522.5" x2="787.5" y2="530.0"/>
<line x1="787.5" y1="530.0" x2="777.5" y2="535.0"/>
<line x1="777.5" y1="535.0" x2="765.0" y2="540.0"/>
<line x1="765.0" y1="540.0" x2="755.0" y2="543.0"/>
<line x1="755.0" y1="543.0" x2="752.5" y2="526.0"/>
<line x1="752.5" y1="526.0" x2="755.0" y2="511.3"/>
<line x1="765.0" y1="545.0" x2="752.0" y2="562.1"/>
<line x1="765.0" y1="545.0" x2="760.0" y2="560.9"/>
<line x1="765.0" y1="545.0" x2="770.0" y2="559.3"/>
<line x1="787.5" y1="537.0" x2="775.0" y2="558.4"/>
<line x1="787.5" y1="537.0" x2="785.0" y2="556.3"/>
<line x1="787.5" y1="537.0" x2="795.0" y2="555.6"/>
<line x1="787.5" y1="537.0" x2="803.0" y2="555.0"/>
<line x1="803.8" y1="527.5" x2="803.0" y2="555.0"/>
<line x1="803.8" y1="527.5" x2="808.0" y2="540.6"/>
<line x1="741.4" y1="507.5" x2="741.0" y2="535.0"/>
<line x1="741.0" y1="535.0" x2="735.0" y2="552.0"/>
<line x1="735.0" y1="552.0" x2="729.7" y2="551.0"/>
<line x1="734.4" y1="485.6" x2="741.4" y2="507.5"/>
<line x1="741.4" y1="507.5" x2="752.5" y2="513.0"/>
<line x1="741.0" y1="535.0" x2="752.5" y2="538.0"/>
<line x1="741.0" y1="520.0" x2="752.5" y2="526.0"/>
<line x1="741.0" y1="553.0" x2="715.6" y2="570.0"/>
<line x1="741.0" y1="553.0" x2="725.0" y2="567.8"/>
<line x1="741.0" y1="553.0" x2="741.0" y2="564.3"/>
<line x1="741.0" y1="553.0" x2="751.6" y2="562.2"/>
<line x1="741.0" y1="553.0" x2="752.5" y2="543.0"/>
<line x1="574.7" y1="535.2" x2="580.8" y2="533.4"/>
<line x1="580.8" y1="533.4" x2="586.9" y2="531.6"/>
<line x1="586.9" y1="531.6" x2="592.9" y2="529.9"/>
<line x1="592.9" y1="529.9" x2="599.0" y2="528.1"/>
<line x1="599.0" y1="528.1" x2="605.1" y2="526.2"/>
<line x1="605.1" y1="526.2" x2="611.1" y2="524.2"/>
<line x1="611.1" y1="524.2" x2="617.1" y2="522.2"/>
<line x1="617.1" y1="522.2" x2="623.1" y2="520.3"/>
<line x1="623.1" y1="520.3" x2="629.2" y2="518.3"/>
<line x1="629.2" y1="518.3" x2="635.3" y2="516.7"/>
<line x1="635.3" y1="516.7" x2="641.5" y2="515.3"/>
<line x1="641.5" y1="515.3" x2="647.7" y2="513.9"/>
<line x1="647.7" y1="513.9" x2="653.8" y2="512.6"/>
<line x1="653.8" y1="512.6" x2="660.0" y2="511.2"/>
<line x1="660.0" y1="511.2" x2="666.2" y2="509.8"/>
<line x1="666.2" y1="509.8" x2="672.4" y2="508.4"/>
<line x1="672.4" y1="508.4" x2="678.6" y2="507.0"/>
<line x1="678.6" y1="507.0" x2="684.7" y2="505.5"/>
<line x1="684.7" y1="505.5" x2="690.9" y2="504.0"/>
<line x1="690.9" y1="504.0" x2="697.0" y2="502.4"/>
<line x1="697.0" y1="502.4" x2="703.2" y2="500.9"/>
<line x1="703.2" y1="500.9" x2="709.4" y2="499.9"/>
<line x1="709.4" y1="499.9" x2="715.7" y2="499.1"/>
<line x1="715.7" y1="499.1" x2="722.0" y2="498.3"/>
<line x1="576.9" y1="550.9" x2="583.0" y2="549.1"/>
<line x1="583.0" y1="549.1" x2="589.1" y2="547.3"/>
<line x1="589.1" y1="547.3" x2="595.1" y2="545.5"/>
<line x1="595.1" y1="545.5" x2="601.2" y2="543.7"/>
<line x1="601.2" y1="543.7" x2="607.3" y2="541.8"/>
<line x1="607.3" y1="541.8" x2="613.3" y2="539.9"/>
<line x1="613.3" y1="539.9" x2="619.3" y2="537.8"/>
<line x1="619.3" y1="537.8" x2="625.3" y2="535.8"/>
<line x1="625.3" y1="535.8" x2="631.3" y2="533.7"/>
<line x1="631.3" y1="533.7" x2="637.4" y2="532.0"/>
<line x1="637.4" y1="532.0" x2="643.5" y2="530.4"/>
<line x1="643.5" y1="530.4" x2="649.6" y2="528.7"/>
<line x1="649.6" y1="528.7" x2="655.7" y2="527.1"/>
<line x1="655.7" y1="527.1" x2="661.9" y2="525.7"/>
<line x1="661.9" y1="525.7" x2="668.1" y2="524.3"/>
<line x1="668.1" y1="524.3" x2="674.3" y2="522.8"/>
<line x1="674.3" y1="522.8" x2="680.4" y2="521.4"/>
<line x1="680.4" y1="521.4" x2="686.6" y2="519.9"/>
<line x1="686.6" y1="519.9" x2="692.8" y2="518.5"/>
<line x1="692.8" y1="518.5" x2="698.9" y2="517.0"/>
<line x1="698.9" y1="517.0" x2="705.1" y2="515.5"/>
<line x1="705.1" y1="515.5" x2="711.3" y2="514.3"/>
<line x1="711.3" y1="514.3" x2="717.5" y2="513.3"/>
<line x1="717.5" y1="513.3" x2="723.8" y2="512.2"/>
<line x1="578.7" y1="563.5" x2="584.8" y2="561.7"/>
<line x1="584.8" y1="561.7" x2="590.9" y2="559.9"/>
<line x1="590.9" y1="559.9" x2="596.9" y2="558.1"/>
<line x1="596.9" y1="558.1" x2="603.0" y2="556.3"/>
<line x1="603.0" y1="556.3" x2="609.1" y2="554.4"/>
<line x1="609.1" y1="554.4" x2="615.1" y2="552.5"/>
<line x1="615.1" y1="552.5" x2="621.1" y2="550.4"/>
<line x1="621.1" y1="550.4" x2="627.1" y2="548.3"/>
<line x1="627.1" y1="548.3" x2="633.0" y2="546.2"/>
<line x1="633.0" y1="546.2" x2="639.1" y2="544.3"/>
<line x1="639.1" y1="544.3" x2="645.1" y2="542.5"/>
<line x1="645.1" y1="542.5" x2="651.2" y2="540.7"/>
<line x1="651.2" y1="540.7" x2="657.3" y2="538.9"/>
<line x1="657.3" y1="538.9" x2="663.4" y2="537.5"/>
<line x1="663.4" y1="537.5" x2="669.6" y2="536.0"/>
<line x1="669.6" y1="536.0" x2="675.8" y2="534.5"/>
<line x1="675.8" y1="534.5" x2="681.9" y2="533.1"/>
<line x1="681.9" y1="533.1" x2="688.1" y2="531.6"/>
<line x1="688.1" y1="531.6" x2="694.3" y2="530.2"/>
<line x1="694.3" y1="530.2" x2="700.5" y2="528.8"/>
<line x1="700.5" y1="528.8" x2="706.6" y2="527.3"/>
<line x1="706.6" y1="527.3" x2="712.8" y2="526.0"/>
<line x1="712.8" y1="526.0" x2="719.0" y2="524.7"/>
<line x1="719.0" y1="524.7" x2="725.2" y2="523.5"/>
<line x1="579.2" y1="567.2" x2="585.3" y2="565.4"/>
<line x1="585.3" y1="565.4" x2="591.4" y2="563.5"/>
<line x1="591.4" y1="563.5" x2="597.4" y2="561.7"/>
<line x1="597.4" y1="561.7" x2="603.5" y2="559.9"/>
<line x1="603.5" y1="559.9" x2="609.6" y2="558.1"/>
<line x1="609.6" y1="558.1" x2="615.6" y2="556.2"/>
<line x1="615.6" y1="556.2" x2="621.6" y2="554.0"/>
<line x1="621.6" y1="554.0" x2="627.6" y2="551.9"/>
<line x1="627.6" y1="551.9" x2="633.5" y2="549.8"/>
<line x1="633.5" y1="549.8" x2="639.6" y2="547.8"/>
<line x1="639.6" y1="547.8" x2="645.6" y2="546.0"/>
<line x1="645.6" y1="546.0" x2="651.6" y2="544.1"/>
<line x1="651.6" y1="544.1" x2="657.7" y2="542.3"/>
<line x1="657.7" y1="542.3" x2="663.9" y2="540.8"/>
<line x1="663.9" y1="540.8" x2="670.0" y2="539.4"/>
<line x1="670.0" y1="539.4" x2="676.2" y2="537.9"/>
<line x1="676.2" y1="537.9" x2="682.4" y2="536.4"/>
<line x1="682.4" y1="536.4" x2="688.5" y2="534.9"/>
<line x1="688.5" y1="534.9" x2="694.7" y2="533.5"/>
<line x1="694.7" y1="533.5" x2="700.9" y2="532.2"/>
<line x1="700.9" y1="532.2" x2="707.1" y2="530.7"/>
<line x1="707.1" y1="530.7" x2="713.2" y2="529.3"/>
<line x1="713.2" y1="529.3" x2="719.4" y2="528.0"/>
<line x1="719.4" y1="528.0" x2="725.6" y2="526.7"/>
<line x1="579.6" y1="569.9" x2="585.7" y2="568.1"/>
<line x1="585.7" y1="568.1" x2="591.7" y2="566.3"/>
<line x1="591.7" y1="566.3" x2="597.8" y2="564.4"/>
<line x1="597.8" y1="564.4" x2="603.9" y2="562.6"/>
<line x1="603.9" y1="562.6" x2="610.0" y2="560.8"/>
<line x1="610.0" y1="560.8" x2="616.0" y2="558.9"/>
<line x1="616.0" y1="558.9" x2="622.0" y2="556.7"/>
<line x1="622.0" y1="556.7" x2="627.9" y2="554.6"/>
<line x1="627.9" y1="554.6" x2="633.9" y2="552.5"/>
<line x1="633.9" y1="552.5" x2="639.9" y2="550.5"/>
<line x1="639.9" y1="550.5" x2="645.9" y2="548.6"/>
<line x1="645.9" y1="548.6" x2="652.0" y2="546.7"/>
<line x1="652.0" y1="546.7" x2="658.0" y2="544.8"/>
<line x1="658.0" y1="544.8" x2="664.2" y2="543.3"/>
<line x1="664.2" y1="543.3" x2="670.4" y2="541.9"/>
<line x1="670.4" y1="541.9" x2="676.5" y2="540.4"/>
<line x1="676.5" y1="540.4" x2="682.7" y2="538.9"/>
<line x1="682.7" y1="538.9" x2="688.8" y2="537.4"/>
<line x1="688.8" y1="537.4" x2="695.0" y2="536.0"/>
<line x1="695.0" y1="536.0" x2="701.2" y2="534.7"/>
<line x1="701.2" y1="534.7" x2="707.4" y2="533.3"/>
<line x1="707.4" y1="533.3" x2="713.6" y2="531.8"/>
<line x1="713.6" y1="531.8" x2="719.7" y2="530.5"/>
<line x1="719.7" y1="530.5" x2="725.9" y2="529.1"/>
<line x1="580.0" y1="572.6" x2="586.0" y2="570.8"/>
<line x1="586.0" y1="570.8" x2="592.1" y2="569.0"/>
<line x1="592.1" y1="569.0" x2="598.2" y2="567.2"/>
<line x1="598.2" y1="567.2" x2="604.3" y2="565.3"/>
<line x1="604.3" y1="565.3" x2="610.3" y2="563.5"/>
<line x1="610.3" y1="563.5" x2="616.4" y2="561.6"/>
<line x1="616.4" y1="561.6" x2="622.4" y2="559.4"/>
<line x1="622.4" y1="559.4" x2="628.3" y2="557.3"/>
<line x1="628.3" y1="557.3" x2="634.3" y2="555.1"/>
<line x1="634.3" y1="555.1" x2="640.3" y2="553.1"/>
<line x1="640.3" y1="553.1" x2="646.3" y2="551.2"/>
<line x1="646.3" y1="551.2" x2="652.3" y2="549.2"/>
<line x1="652.3" y1="549.2" x2="658.3" y2="547.3"/>
<line x1="658.3" y1="547.3" x2="664.5" y2="545.9"/>
<line x1="664.5" y1="545.9" x2="670.7" y2="544.4"/>
<line x1="670.7" y1="544.4" x2="676.8" y2="542.9"/>
<line x1="676.8" y1="542.9" x2="683.0" y2="541.4"/>
<line x1="683.0" y1="541.4" x2="689.2" y2="539.9"/>
<line x1="689.2" y1="539.9" x2="695.4" y2="538.6"/>
<line x1="695.4" y1="538.6" x2="701.6" y2="537.2"/>
<line x1="701.6" y1="537.2" x2="707.7" y2="535.8"/>
<line x1="707.7" y1="535.8" x2="713.9" y2="534.3"/>
<line x1="713.9" y1="534.3" x2="720.0" y2="532.9"/>
<line x1="720.0" y1="532.9" x2="726.2" y2="531.5"/>
<line x1="580.3" y1="575.0" x2="586.4" y2="573.2"/>
<line x1="586.4" y1="573.2" x2="592.5" y2="571.4"/>
<line x1="592.5" y1="571.4" x2="598.5" y2="569.6"/>
<line x1="598.5" y1="569.6" x2="604.6" y2="567.7"/>
<line x1="604.6" y1="567.7" x2="610.7" y2="565.9"/>
<line x1="610.7" y1="565.9" x2="616.7" y2="564.0"/>
<line x1="616.7" y1="564.0" x2="622.7" y2="561.8"/>
<line x1="622.7" y1="561.8" x2="628.6" y2="559.7"/>
<line x1="628.6" y1="559.7" x2="634.6" y2="557.5"/>
<line x1="634.6" y1="557.5" x2="640.6" y2="555.5"/>
<line x1="640.6" y1="555.5" x2="646.6" y2="553.5"/>
<line x1="646.6" y1="553.5" x2="652.6" y2="551.5"/>
<line x1="652.6" y1="551.5" x2="658.6" y2="549.6"/>
<line x1="658.6" y1="549.6" x2="664.8" y2="548.1"/>
<line x1="664.8" y1="548.1" x2="671.0" y2="546.6"/>
<line x1="671.0" y1="546.6" x2="677.1" y2="545.1"/>
<line x1="677.1" y1="545.1" x2="683.3" y2="543.6"/>
<line x1="683.3" y1="543.6" x2="689.5" y2="542.1"/>
<line x1="689.5" y1="542.1" x2="695.6" y2="540.8"/>
<line x1="695.6" y1="540.8" x2="701.8" y2="539.4"/>
<line x1="701.8" y1="539.4" x2="708.0" y2="538.0"/>
<line x1="708.0" y1="538.0" x2="714.2" y2="536.5"/>
<line x1="714.2" y1="536.5" x2="720.3" y2="535.1"/>
<line x1="720.3" y1="535.1" x2="726.5" y2="533.7"/>
<line x1="583.2" y1="595.5" x2="589.3" y2="593.7"/>
<line x1="589.3" y1="593.7" x2="595.3" y2="591.8"/>
<line x1="595.3" y1="591.8" x2="601.4" y2="590.0"/>
<line x1="601.4" y1="590.0" x2="607.5" y2="588.2"/>
<line x1="607.5" y1="588.2" x2="613.6" y2="586.3"/>
<line x1="613.6" y1="586.3" x2="619.6" y2="584.5"/>
<line x1="619.6" y1="584.5" x2="625.6" y2="582.3"/>
<line x1="625.6" y1="582.3" x2="631.5" y2="580.0"/>
<line x1="631.5" y1="580.0" x2="637.4" y2="577.7"/>
<line x1="637.4" y1="577.7" x2="643.3" y2="575.4"/>
<line x1="643.3" y1="575.4" x2="649.2" y2="573.2"/>
<line x1="649.2" y1="573.2" x2="655.2" y2="570.9"/>
<line x1="655.2" y1="570.9" x2="661.1" y2="568.7"/>
<line x1="661.1" y1="568.7" x2="667.3" y2="567.1"/>
<line x1="667.3" y1="567.1" x2="673.4" y2="565.6"/>
<line x1="673.4" y1="565.6" x2="679.6" y2="564.1"/>
<line x1="679.6" y1="564.1" x2="685.7" y2="562.5"/>
<line x1="685.7" y1="562.5" x2="691.9" y2="561.0"/>
<line x1="691.9" y1="561.0" x2="698.1" y2="559.8"/>
<line x1="698.1" y1="559.8" x2="704.3" y2="558.5"/>
<line x1="704.3" y1="558.5" x2="710.5" y2="557.2"/>
<line x1="710.5" y1="557.2" x2="716.6" y2="555.4"/>
<line x1="716.6" y1="555.4" x2="722.7" y2="553.7"/>
<line x1="722.7" y1="553.7" x2="728.8" y2="551.9"/>
<line x1="574.7" y1="535.2" x2="576.9" y2="550.9"/>
<line x1="576.9" y1="550.9" x2="579.0" y2="565.4"/>
<line x1="580.3" y1="575.0" x2="583.2" y2="595.5"/>
<line x1="574.7" y1="535.2" x2="595.1" y2="545.5"/>
<line x1="592.9" y1="529.9" x2="576.9" y2="550.9"/>
<line x1="576.9" y1="550.9" x2="597.2" y2="559.9"/>
<line x1="580.3" y1="575.0" x2="592.3" y2="592.8"/>
<line x1="592.3" y1="592.8" x2="598.5" y2="569.6"/>
<line x1="579.0" y1="565.4" x2="598.5" y2="569.6"/>
<line x1="592.9" y1="529.9" x2="595.1" y2="545.5"/>
<line x1="595.1" y1="545.5" x2="597.2" y2="559.9"/>
<line x1="598.5" y1="569.6" x2="601.4" y2="590.0"/>
<line x1="595.1" y1="545.5" x2="611.1" y2="524.2"/>
<line x1="595.1" y1="545.5" x2="615.4" y2="554.3"/>
<line x1="613.3" y1="539.9" x2="597.2" y2="559.9"/>
<line x1="598.5" y1="569.6" x2="610.5" y2="587.3"/>
<line x1="610.5" y1="587.3" x2="616.7" y2="564.0"/>
<line x1="597.2" y1="559.9" x2="616.7" y2="564.0"/>
<line x1="611.1" y1="524.2" x2="613.3" y2="539.9"/>
<line x1="613.3" y1="539.9" x2="615.4" y2="554.3"/>
<line x1="616.7" y1="564.0" x2="619.6" y2="584.5"/>
<line x1="611.1" y1="524.2" x2="631.3" y2="533.7"/>
<line x1="629.2" y1="518.3" x2="613.3" y2="539.9"/>
<line x1="613.3" y1="539.9" x2="633.3" y2="548.0"/>
<line x1="616.7" y1="564.0" x2="628.5" y2="581.1"/>
<line x1="628.5" y1="581.1" x2="634.6" y2="557.5"/>
<line x1="615.4" y1="554.3" x2="634.6" y2="557.5"/>
<line x1="629.2" y1="518.3" x2="631.3" y2="533.7"/>
<line x1="631.3" y1="533.7" x2="633.3" y2="548.0"/>
<line x1="634.6" y1="557.5" x2="637.4" y2="577.7"/>
<line x1="631.3" y1="533.7" x2="647.7" y2="513.9"/>
<line x1="631.3" y1="533.7" x2="651.4" y2="542.4"/>
<line x1="649.6" y1="528.7" x2="633.3" y2="548.0"/>
<line x1="634.6" y1="557.5" x2="646.3" y2="574.3"/>
<line x1="646.3" y1="574.3" x2="652.6" y2="551.5"/>
<line x1="633.3" y1="548.0" x2="652.6" y2="551.5"/>
<line x1="647.7" y1="513.9" x2="649.6" y2="528.7"/>
<line x1="649.6" y1="528.7" x2="651.4" y2="542.4"/>
<line x1="652.6" y1="551.5" x2="655.2" y2="570.9"/>
<line x1="647.7" y1="513.9" x2="668.1" y2="524.3"/>
<line x1="666.2" y1="509.8" x2="649.6" y2="528.7"/>
<line x1="649.6" y1="528.7" x2="669.8" y2="537.7"/>
<line x1="652.6" y1="551.5" x2="664.2" y2="567.9"/>
<line x1="664.2" y1="567.9" x2="671.0" y2="546.6"/>
<line x1="651.4" y1="542.4" x2="671.0" y2="546.6"/>
<line x1="666.2" y1="509.8" x2="668.1" y2="524.3"/>
<line x1="668.1" y1="524.3" x2="669.8" y2="537.7"/>
<line x1="671.0" y1="546.6" x2="673.4" y2="565.6"/>
<line x1="668.1" y1="524.3" x2="684.7" y2="505.5"/>
<line x1="668.1" y1="524.3" x2="688.3" y2="533.3"/>
<line x1="686.6" y1="519.9" x2="669.8" y2="537.7"/>
<line x1="671.0" y1="546.6" x2="682.7" y2="563.3"/>
<line x1="682.7" y1="563.3" x2="689.5" y2="542.1"/>
<line x1="669.8" y1="537.7" x2="689.5" y2="542.1"/>
<line x1="684.7" y1="505.5" x2="686.6" y2="519.9"/>
<line x1="686.6" y1="519.9" x2="688.3" y2="533.3"/>
<line x1="689.5" y1="542.1" x2="691.9" y2="561.0"/>
<line x1="684.7" y1="505.5" x2="705.1" y2="515.5"/>
<line x1="703.2" y1="500.9" x2="686.6" y2="519.9"/>
<line x1="686.6" y1="519.9" x2="706.8" y2="529.0"/>
<line x1="689.5" y1="542.1" x2="701.2" y2="559.1"/>
<line x1="701.2" y1="559.1" x2="708.0" y2="538.0"/>
<line x1="688.3" y1="533.3" x2="708.0" y2="538.0"/>
<line x1="703.2" y1="500.9" x2="705.1" y2="515.5"/>
<line x1="705.1" y1="515.5" x2="706.8" y2="529.0"/>
<line x1="708.0" y1="538.0" x2="710.5" y2="557.2"/>
<line x1="705.1" y1="515.5" x2="722.0" y2="498.3"/>
<line x1="705.1" y1="515.5" x2="725.4" y2="525.1"/>
<line x1="723.8" y1="512.2" x2="706.8" y2="529.0"/>
<line x1="708.0" y1="538.0" x2="719.7" y2="554.5"/>
<line x1="719.7" y1="554.5" x2="726.5" y2="533.7"/>
<line x1="706.8" y1="529.0" x2="726.5" y2="533.7"/>
<line x1="722.0" y1="498.3" x2="723.8" y2="512.2"/>
<line x1="723.8" y1="512.2" x2="725.4" y2="525.1"/>
<line x1="726.5" y1="533.7" x2="728.8" y2="551.9"/>
<line x1="583.2" y1="595.5" x2="589.2" y2="611.3"/>
<line x1="583.2" y1="595.5" x2="603.2" y2="606.0"/>
<line x1="604.0" y1="589.2" x2="610.0" y2="603.6"/>
<line x1="604.0" y1="589.2" x2="624.0" y2="598.8"/>
<line x1="624.7" y1="582.6" x2="630.7" y2="596.4"/>
<line x1="624.7" y1="582.6" x2="644.7" y2="591.5"/>
<line x1="645.0" y1="574.8" x2="651.0" y2="589.3"/>
<line x1="645.0" y1="574.8" x2="665.0" y2="584.7"/>
<line x1="665.5" y1="567.6" x2="671.5" y2="582.7"/>
<line x1="665.5" y1="567.6" x2="685.5" y2="578.5"/>
<line x1="686.6" y1="562.3" x2="692.6" y2="576.4"/>
<line x1="686.6" y1="562.3" x2="706.6" y2="572.5"/>
<line x1="707.9" y1="557.8" x2="713.9" y2="570.5"/>
<line x1="707.9" y1="557.8" x2="727.9" y2="567.1"/>
<line x1="728.8" y1="551.9" x2="734.8" y2="565.6"/>
<line x1="728.8" y1="551.9" x2="735.0" y2="565.6"/>
<line x1="537.2" y1="516.3" x2="513.8" y2="536.0"/>
<line x1="537.2" y1="516.3" x2="556.0" y2="475.5"/>
<line x1="537.2" y1="516.3" x2="563.8" y2="475.9"/>
<line x1="537.2" y1="516.3" x2="570.0" y2="506.9"/>
<line x1="537.2" y1="516.3" x2="562.2" y2="538.1"/>
<line x1="537.2" y1="516.3" x2="585.6" y2="530.3"/>
<line x1="570.0" y1="506.9" x2="563.8" y2="475.9"/>
<line x1="570.0" y1="506.9" x2="576.3" y2="476.5"/>
<line x1="570.0" y1="506.9" x2="582.5" y2="476.6"/>
<line x1="570.0" y1="506.9" x2="592.0" y2="476.8"/>
<line x1="570.0" y1="506.9" x2="574.7" y2="535.2"/>
<line x1="513.8" y1="539.7" x2="560.6" y2="541.3"/>
<line x1="513.8" y1="538.5" x2="560.6" y2="540.0"/>
<line x1="524.0" y1="543.0" x2="557.0" y2="548.0"/>
<line x1="557.0" y1="548.0" x2="560.6" y2="541.3"/>
<line x1="528.0" y1="546.0" x2="556.0" y2="552.0"/>
<line x1="560.6" y1="541.3" x2="557.0" y2="548.0"/>
<line x1="557.0" y1="548.0" x2="556.0" y2="560.0"/>
<line x1="563.0" y1="538.1" x2="513.8" y2="539.7"/>
<line x1="563.0" y1="538.1" x2="526.3" y2="563.1"/>
<line x1="563.0" y1="538.1" x2="576.3" y2="594.4"/>
<line x1="563.0" y1="538.1" x2="556.0" y2="560.0"/>
<line x1="563.0" y1="538.1" x2="574.7" y2="535.2"/>
<line x1="526.3" y1="563.1" x2="560.6" y2="569.4"/>
<line x1="560.6" y1="569.4" x2="576.3" y2="594.4"/>
<line x1="556.0" y1="560.0" x2="526.3" y2="563.1"/>
<line x1="556.0" y1="560.0" x2="560.6" y2="569.4"/>
<line x1="535.6" y1="583.4" x2="560.6" y2="569.4"/>
<line x1="545.0" y1="594.4" x2="576.3" y2="594.4"/>
<line x1="545.0" y1="594.4" x2="560.6" y2="569.4"/>
<line x1="545.0" y1="594.4" x2="566.9" y2="620.3"/>
<line x1="576.3" y1="594.4" x2="566.9" y2="620.3"/>
<line x1="545.0" y1="594.4" x2="556.0" y2="625.0"/>
<line x1="576.3" y1="594.4" x2="570.0" y2="619.1"/>
<line x1="576.3" y1="594.4" x2="575.0" y2="617.0"/>
<line x1="576.3" y1="594.4" x2="580.0" y2="615.0"/>
<line x1="576.3" y1="594.4" x2="588.0" y2="611.8"/>
<line x1="576.3" y1="594.4" x2="598.0" y2="607.8"/>
<line x1="514.0" y1="487.0" x2="504.0" y2="501.0"/>
<line x1="517.8" y1="485.0" x2="505.4" y2="506.1"/>
<line x1="521.6" y1="483.0" x2="506.8" y2="511.1"/>
<line x1="525.5" y1="481.5" x2="508.1" y2="516.2"/>
<line x1="529.3" y1="480.0" x2="509.3" y2="521.3"/>
<line x1="533.1" y1="478.8" x2="510.6" y2="526.4"/>
<line x1="536.9" y1="478.1" x2="514.6" y2="528.0"/>
<line x1="540.7" y1="477.3" x2="519.8" y2="528.0"/>
<line x1="544.5" y1="476.8" x2="524.4" y2="525.4"/>
<line x1="548.4" y1="476.4" x2="528.9" y2="522.7"/>
<line x1="552.2" y1="475.9" x2="533.1" y2="519.6"/>
<line x1="556.0" y1="475.5" x2="537.2" y2="516.3"/>
<line x1="511.0" y1="528.0" x2="537.2" y2="516.3"/>
<line x1="515.5" y1="475.2" x2="515.2" y2="477.6"/>
<line x1="515.2" y1="477.6" x2="514.9" y2="479.9"/>
<line x1="514.9" y1="479.9" x2="514.6" y2="482.3"/>
<line x1="514.6" y1="482.3" x2="514.3" y2="484.6"/>
<line x1="514.3" y1="484.6" x2="514.0" y2="487.0"/>
<line x1="507.6" y1="484.4" x2="507.6" y2="486.3"/>
<line x1="507.6" y1="486.3" x2="507.7" y2="488.2"/>
<line x1="507.7" y1="488.2" x2="507.7" y2="490.0"/>
<line x1="507.7" y1="490.0" x2="507.7" y2="491.9"/>
<line x1="507.7" y1="491.9" x2="507.7" y2="493.7"/>
<line x1="498.4" y1="492.4" x2="499.4" y2="494.1"/>
<line x1="499.4" y1="494.1" x2="500.3" y2="495.8"/>
<line x1="500.3" y1="495.8" x2="501.3" y2="497.5"/>
<line x1="501.3" y1="497.5" x2="502.2" y2="499.2"/>
<line x1="502.2" y1="499.2" x2="503.1" y2="500.9"/>
<line x1="488.6" y1="499.4" x2="491.8" y2="501.5"/>
<line x1="491.8" y1="501.5" x2="495.0" y2="503.6"/>
<line x1="495.0" y1="503.6" x2="498.3" y2="505.8"/>
<line x1="498.3" y1="505.8" x2="501.5" y2="507.9"/>
<line x1="501.5" y1="507.9" x2="504.7" y2="510.0"/>
<line x1="478.3" y1="505.9" x2="484.1" y2="508.5"/>
<line x1="484.1" y1="508.5" x2="489.8" y2="511.1"/>
<line x1="489.8" y1="511.1" x2="495.6" y2="513.7"/>
<line x1="495.6" y1="513.7" x2="501.3" y2="516.3"/>
<line x1="501.3" y1="516.3" x2="507.1" y2="518.8"/>
<line x1="468.9" y1="513.1" x2="477.1" y2="516.1"/>
<line x1="477.1" y1="516.1" x2="485.2" y2="519.0"/>
<line x1="485.2" y1="519.0" x2="493.4" y2="521.9"/>
<line x1="493.4" y1="521.9" x2="501.5" y2="524.8"/>
<line x1="501.5" y1="524.8" x2="509.6" y2="527.7"/>
<line x1="463.7" y1="524.1" x2="473.4" y2="526.5"/>
<line x1="473.4" y1="526.5" x2="483.1" y2="529.0"/>
<line x1="483.1" y1="529.0" x2="492.9" y2="531.5"/>
<line x1="492.9" y1="531.5" x2="502.6" y2="534.0"/>
<line x1="502.6" y1="534.0" x2="512.3" y2="536.5"/>
<line x1="459.8" y1="535.6" x2="470.9" y2="537.5"/>
<line x1="470.9" y1="537.5" x2="482.0" y2="539.4"/>
<line x1="482.0" y1="539.4" x2="493.1" y2="541.3"/>
<line x1="493.1" y1="541.3" x2="504.2" y2="543.2"/>
<line x1="504.2" y1="543.2" x2="515.3" y2="545.1"/>
<line x1="459.5" y1="547.6" x2="471.4" y2="548.8"/>
<line x1="471.4" y1="548.8" x2="483.2" y2="550.0"/>
<line x1="483.2" y1="550.0" x2="495.0" y2="551.2"/>
<line x1="495.0" y1="551.2" x2="506.9" y2="552.5"/>
<line x1="506.9" y1="552.5" x2="518.7" y2="553.7"/>
<line x1="460.0" y1="559.7" x2="472.5" y2="560.2"/>
<line x1="472.5" y1="560.2" x2="485.0" y2="560.7"/>
<line x1="485.0" y1="560.7" x2="497.5" y2="561.1"/>
<line x1="497.5" y1="561.1" x2="510.0" y2="561.6"/>
<line x1="510.0" y1="561.6" x2="522.5" y2="562.0"/>
<line x1="460.3" y1="571.9" x2="473.6" y2="571.5"/>
<line x1="473.6" y1="571.5" x2="486.8" y2="571.2"/>
<line x1="486.8" y1="571.2" x2="500.1" y2="570.9"/>
<line x1="500.1" y1="570.9" x2="513.3" y2="570.6"/>
<line x1="513.3" y1="570.6" x2="526.6" y2="570.2"/>
<line x1="460.3" y1="584.0" x2="474.6" y2="582.8"/>
<line x1="474.6" y1="582.8" x2="488.9" y2="581.5"/>
<line x1="488.9" y1="581.5" x2="503.2" y2="580.3"/>
<line x1="503.2" y1="580.3" x2="517.5" y2="579.1"/>
<line x1="517.5" y1="579.1" x2="531.8" y2="577.8"/>
<line x1="463.1" y1="595.6" x2="478.0" y2="593.5"/>
<line x1="478.0" y1="593.5" x2="492.8" y2="591.4"/>
<line x1="492.8" y1="591.4" x2="507.6" y2="589.3"/>
<line x1="507.6" y1="589.3" x2="522.4" y2="587.3"/>
<line x1="522.4" y1="587.3" x2="537.2" y2="585.2"/>
<line x1="470.0" y1="605.6" x2="484.7" y2="602.9"/>
<line x1="484.7" y1="602.9" x2="499.4" y2="600.2"/>
<line x1="499.4" y1="600.2" x2="514.0" y2="597.4"/>
<line x1="514.0" y1="597.4" x2="528.7" y2="594.7"/>
<line x1="528.7" y1="594.7" x2="543.4" y2="592.0"/>
<line x1="515.5" y1="475.2" x2="507.6" y2="484.4"/>
<line x1="507.6" y1="484.4" x2="498.4" y2="492.4"/>
<line x1="498.4" y1="492.4" x2="488.6" y2="499.4"/>
<line x1="488.6" y1="499.4" x2="478.3" y2="505.9"/>
<line x1="478.3" y1="505.9" x2="468.9" y2="513.1"/>
<line x1="468.9" y1="513.1" x2="463.7" y2="524.1"/>
<line x1="463.7" y1="524.1" x2="459.8" y2="535.6"/>
<line x1="459.8" y1="535.6" x2="459.5" y2="547.6"/>
<line x1="459.5" y1="547.6" x2="460.0" y2="559.7"/>
<line x1="460.0" y1="559.7" x2="460.3" y2="571.9"/>
<line x1="460.3" y1="571.9" x2="460.3" y2="584.0"/>
<line x1="460.3" y1="584.0" x2="463.1" y2="595.6"/>
<line x1="463.1" y1="595.6" x2="470.0" y2="605.6"/>
<line x1="515.2" y1="477.6" x2="507.6" y2="486.3"/>
<line x1="507.6" y1="486.3" x2="499.4" y2="494.1"/>
<line x1="499.4" y1="494.1" x2="491.8" y2="501.5"/>
<line x1="491.8" y1="501.5" x2="484.1" y2="508.5"/>
<line x1="484.1" y1="508.5" x2="477.1" y2="516.1"/>
<line x1="477.1" y1="516.1" x2="473.4" y2="526.5"/>
<line x1="473.4" y1="526.5" x2="470.9" y2="537.5"/>
<line x1="470.9" y1="537.5" x2="471.4" y2="548.8"/>
<line x1="471.4" y1="548.8" x2="472.5" y2="560.2"/>
<line x1="472.5" y1="560.2" x2="473.6" y2="571.5"/>
<line x1="473.6" y1="571.5" x2="474.6" y2="582.8"/>
<line x1="474.6" y1="582.8" x2="478.0" y2="593.5"/>
<line x1="478.0" y1="593.5" x2="484.7" y2="602.9"/>
<line x1="514.9" y1="479.9" x2="507.7" y2="488.2"/>
<line x1="507.7" y1="488.2" x2="500.3" y2="495.8"/>
<line x1="500.3" y1="495.8" x2="495.0" y2="503.6"/>
<line x1="495.0" y1="503.6" x2="489.8" y2="511.1"/>
<line x1="489.8" y1="511.1" x2="485.2" y2="519.0"/>
<line x1="485.2" y1="519.0" x2="483.1" y2="529.0"/>
<line x1="483.1" y1="529.0" x2="482.0" y2="539.4"/>
<line x1="482.0" y1="539.4" x2="483.2" y2="550.0"/>
<line x1="483.2" y1="550.0" x2="485.0" y2="560.7"/>
<line x1="485.0" y1="560.7" x2="486.8" y2="571.2"/>
<line x1="486.8" y1="571.2" x2="488.9" y2="581.5"/>
<line x1="488.9" y1="581.5" x2="492.8" y2="591.4"/>
<line x1="492.8" y1="591.4" x2="499.4" y2="600.2"/>
<line x1="514.6" y1="482.3" x2="507.7" y2="490.0"/>
<line x1="507.7" y1="490.0" x2="501.3" y2="497.5"/>
<line x1="501.3" y1="497.5" x2="498.3" y2="505.8"/>
<line x1="498.3" y1="505.8" x2="495.6" y2="513.7"/>
<line x1="495.6" y1="513.7" x2="493.4" y2="521.9"/>
<line x1="493.4" y1="521.9" x2="492.9" y2="531.5"/>
<line x1="492.9" y1="531.5" x2="493.1" y2="541.3"/>
<line x1="493.1" y1="541.3" x2="495.0" y2="551.2"/>
<line x1="495.0" y1="551.2" x2="497.5" y2="561.1"/>
<line x1="497.5" y1="561.1" x2="500.1" y2="570.9"/>
<line x1="500.1" y1="570.9" x2="503.2" y2="580.3"/>
<line x1="503.2" y1="580.3" x2="507.6" y2="589.3"/>
<line x1="507.6" y1="589.3" x2="514.0" y2="597.4"/>
<line x1="514.3" y1="484.6" x2="507.7" y2="491.9"/>
<line x1="507.7" y1="491.9" x2="502.2" y2="499.2"/>
<line x1="502.2" y1="499.2" x2="501.5" y2="507.9"/>
<line x1="501.5" y1="507.9" x2="501.3" y2="516.3"/>
<line x1="501.3" y1="516.3" x2="501.5" y2="524.8"/>
<line x1="501.5" y1="524.8" x2="502.6" y2="534.0"/>
<line x1="502.6" y1="534.0" x2="504.2" y2="543.2"/>
<line x1="504.2" y1="543.2" x2="506.9" y2="552.5"/>
<line x1="506.9" y1="552.5" x2="510.0" y2="561.6"/>
<line x1="510.0" y1="561.6" x2="513.3" y2="570.6"/>
<line x1="513.3" y1="570.6" x2="517.5" y2="579.1"/>
<line x1="517.5" y1="579.1" x2="522.4" y2="587.3"/>
<line x1="522.4" y1="587.3" x2="528.7" y2="594.7"/>
<line x1="514.0" y1="487.0" x2="507.7" y2="493.7"/>
<line x1="507.7" y1="493.7" x2="503.1" y2="500.9"/>
<line x1="503.1" y1="500.9" x2="504.7" y2="510.0"/>
<line x1="504.7" y1="510.0" x2="507.1" y2="518.8"/>
<line x1="507.1" y1="518.8" x2="509.6" y2="527.7"/>
<line x1="509.6" y1="527.7" x2="512.3" y2="536.5"/>
<line x1="512.3" y1="536.5" x2="515.3" y2="545.1"/>
<line x1="515.3" y1="545.1" x2="518.7" y2="553.7"/>
<line x1="518.7" y1="553.7" x2="522.5" y2="562.0"/>
<line x1="522.5" y1="562.0" x2="526.6" y2="570.2"/>
<line x1="526.6" y1="570.2" x2="531.8" y2="577.8"/>
<line x1="531.8" y1="577.8" x2="537.2" y2="585.2"/>
<line x1="537.2" y1="585.2" x2="543.4" y2="592.0"/>
<line x1="515.2" y1="477.6" x2="507.6" y2="484.4"/>
<line x1="515.5" y1="475.2" x2="507.6" y2="486.3"/>
<line x1="515.2" y1="477.6" x2="507.6" y2="484.4"/>
<line x1="515.4" y1="476.4" x2="507.6" y2="485.4"/>
<line x1="511.6" y1="479.8" x2="511.4" y2="481.9"/>
<line x1="515.4" y1="476.4" x2="507.6" y2="484.4"/>
<line x1="515.4" y1="476.4" x2="507.6" y2="486.3"/>
<line x1="515.2" y1="477.6" x2="507.7" y2="488.2"/>
<line x1="515.2" y1="477.6" x2="507.7" y2="488.2"/>
<line x1="514.9" y1="479.9" x2="507.6" y2="486.3"/>
<line x1="515.0" y1="478.7" x2="507.7" y2="487.2"/>
<line x1="511.4" y1="481.9" x2="511.3" y2="484.0"/>
<line x1="515.0" y1="478.7" x2="507.6" y2="486.3"/>
<line x1="515.0" y1="478.7" x2="507.7" y2="488.2"/>
<line x1="514.6" y1="482.3" x2="507.7" y2="488.2"/>
<line x1="514.9" y1="479.9" x2="507.7" y2="490.0"/>
<line x1="514.6" y1="482.3" x2="507.7" y2="488.2"/>
<line x1="514.8" y1="481.1" x2="507.7" y2="489.1"/>
<line x1="511.3" y1="484.0" x2="511.1" y2="486.1"/>
<line x1="514.8" y1="481.1" x2="507.7" y2="488.2"/>
<line x1="514.8" y1="481.1" x2="507.7" y2="490.0"/>
<line x1="514.6" y1="482.3" x2="507.7" y2="491.9"/>
<line x1="514.6" y1="482.3" x2="507.7" y2="491.9"/>
<line x1="514.3" y1="484.6" x2="507.7" y2="490.0"/>
<line x1="514.0" y1="487.0" x2="507.7" y2="491.9"/>
<line x1="514.3" y1="484.6" x2="507.7" y2="493.7"/>
<line x1="514.0" y1="487.0" x2="507.7" y2="491.9"/>
<line x1="507.6" y1="484.4" x2="499.4" y2="494.1"/>
<line x1="507.6" y1="484.4" x2="499.4" y2="494.1"/>
<line x1="507.6" y1="486.3" x2="498.4" y2="492.4"/>
<line x1="507.6" y1="485.4" x2="498.9" y2="493.2"/>
<line x1="503.0" y1="488.4" x2="503.5" y2="490.2"/>
<line x1="507.6" y1="485.4" x2="498.4" y2="492.4"/>
<line x1="507.6" y1="485.4" x2="499.4" y2="494.1"/>
<line x1="507.7" y1="488.2" x2="499.4" y2="494.1"/>
<line x1="507.6" y1="486.3" x2="500.3" y2="495.8"/>
<line x1="507.7" y1="488.2" x2="499.4" y2="494.1"/>
<line x1="507.7" y1="487.2" x2="499.9" y2="494.9"/>
<line x1="503.5" y1="490.2" x2="504.0" y2="492.0"/>
<line x1="507.7" y1="487.2" x2="499.4" y2="494.1"/>
<line x1="507.7" y1="487.2" x2="500.3" y2="495.8"/>
<line x1="507.7" y1="488.2" x2="501.3" y2="497.5"/>
<line x1="507.7" y1="488.2" x2="501.3" y2="497.5"/>
<line x1="507.7" y1="490.0" x2="500.3" y2="495.8"/>
<line x1="507.7" y1="489.1" x2="500.8" y2="496.6"/>
<line x1="504.0" y1="492.0" x2="504.5" y2="493.8"/>
<line x1="507.7" y1="489.1" x2="500.3" y2="495.8"/>
<line x1="507.7" y1="489.1" x2="501.3" y2="497.5"/>
<line x1="507.7" y1="491.9" x2="501.3" y2="497.5"/>
<line x1="507.7" y1="490.0" x2="502.2" y2="499.2"/>
<line x1="507.7" y1="491.9" x2="501.3" y2="497.5"/>
<line x1="507.7" y1="491.9" x2="503.1" y2="500.9"/>
<line x1="507.7" y1="491.9" x2="503.1" y2="500.9"/>
<line x1="507.7" y1="493.7" x2="502.2" y2="499.2"/>
<line x1="499.4" y1="494.1" x2="488.6" y2="499.4"/>
<line x1="498.4" y1="492.4" x2="491.8" y2="501.5"/>
<line x1="499.4" y1="494.1" x2="488.6" y2="499.4"/>
<line x1="498.9" y1="493.2" x2="490.2" y2="500.5"/>
<line x1="493.5" y1="495.9" x2="495.6" y2="497.8"/>
<line x1="498.9" y1="493.2" x2="488.6" y2="499.4"/>
<line x1="498.9" y1="493.2" x2="491.8" y2="501.5"/>
<line x1="499.4" y1="494.1" x2="495.0" y2="503.6"/>
<line x1="499.4" y1="494.1" x2="495.0" y2="503.6"/>
<line x1="500.3" y1="495.8" x2="491.8" y2="501.5"/>
<line x1="499.9" y1="494.9" x2="493.4" y2="502.6"/>
<line x1="495.6" y1="497.8" x2="497.7" y2="499.7"/>
<line x1="499.9" y1="494.9" x2="491.8" y2="501.5"/>
<line x1="499.9" y1="494.9" x2="495.0" y2="503.6"/>
<line x1="501.3" y1="497.5" x2="495.0" y2="503.6"/>
<line x1="500.3" y1="495.8" x2="498.3" y2="505.8"/>
<line x1="501.3" y1="497.5" x2="495.0" y2="503.6"/>
<line x1="500.8" y1="496.6" x2="496.7" y2="504.7"/>
<line x1="497.7" y1="499.7" x2="499.8" y2="501.6"/>
<line x1="500.8" y1="496.6" x2="495.0" y2="503.6"/>
<line x1="500.8" y1="496.6" x2="498.3" y2="505.8"/>
<line x1="501.3" y1="497.5" x2="501.5" y2="507.9"/>
<line x1="501.3" y1="497.5" x2="501.5" y2="507.9"/>
<line x1="502.2" y1="499.2" x2="498.3" y2="505.8"/>
<line x1="503.1" y1="500.9" x2="501.5" y2="507.9"/>
<line x1="502.2" y1="499.2" x2="504.7" y2="510.0"/>
<line x1="503.1" y1="500.9" x2="501.5" y2="507.9"/>
<line x1="488.6" y1="499.4" x2="484.1" y2="508.5"/>
<line x1="490.2" y1="500.5" x2="481.2" y2="507.2"/>
<line x1="483.5" y1="502.7" x2="487.9" y2="505.0"/>
<line x1="490.2" y1="500.5" x2="478.3" y2="505.9"/>
<line x1="490.2" y1="500.5" x2="484.1" y2="508.5"/>
<line x1="495.0" y1="503.6" x2="484.1" y2="508.5"/>
<line x1="493.4" y1="502.6" x2="486.9" y2="509.8"/>
<line x1="487.9" y1="505.0" x2="492.4" y2="507.4"/>
<line x1="493.4" y1="502.6" x2="484.1" y2="508.5"/>
<line x1="493.4" y1="502.6" x2="489.8" y2="511.1"/>
<line x1="495.0" y1="503.6" x2="495.6" y2="513.7"/>
<line x1="496.7" y1="504.7" x2="492.7" y2="512.4"/>
<line x1="492.4" y1="507.4" x2="496.9" y2="509.7"/>
<line x1="496.7" y1="504.7" x2="489.8" y2="511.1"/>
<line x1="496.7" y1="504.7" x2="495.6" y2="513.7"/>
<line x1="501.5" y1="507.9" x2="495.6" y2="513.7"/>
<line x1="501.5" y1="507.9" x2="507.1" y2="518.8"/>
<line x1="484.1" y1="508.5" x2="468.9" y2="513.1"/>
<line x1="481.2" y1="507.2" x2="473.0" y2="514.6"/>
<line x1="473.6" y1="509.5" x2="480.6" y2="512.3"/>
<line x1="481.2" y1="507.2" x2="468.9" y2="513.1"/>
<line x1="481.2" y1="507.2" x2="477.1" y2="516.1"/>
<line x1="484.1" y1="508.5" x2="485.2" y2="519.0"/>
<line x1="486.9" y1="509.8" x2="481.1" y2="517.5"/>
<line x1="480.6" y1="512.3" x2="487.5" y2="515.0"/>
<line x1="486.9" y1="509.8" x2="477.1" y2="516.1"/>
<line x1="486.9" y1="509.8" x2="485.2" y2="519.0"/>
<line x1="495.6" y1="513.7" x2="485.2" y2="519.0"/>
<line x1="492.7" y1="512.4" x2="489.3" y2="520.4"/>
<line x1="487.5" y1="515.0" x2="494.5" y2="517.8"/>
<line x1="492.7" y1="512.4" x2="485.2" y2="519.0"/>
<line x1="492.7" y1="512.4" x2="493.4" y2="521.9"/>
<line x1="495.6" y1="513.7" x2="501.5" y2="524.8"/>
<line x1="507.1" y1="518.8" x2="501.5" y2="524.8"/>
<line x1="468.9" y1="513.1" x2="473.4" y2="526.5"/>
<line x1="468.9" y1="513.1" x2="473.4" y2="526.5"/>
<line x1="477.1" y1="516.1" x2="463.7" y2="524.1"/>
<line x1="485.2" y1="519.0" x2="473.4" y2="526.5"/>
<line x1="477.1" y1="516.1" x2="483.1" y2="529.0"/>
<line x1="485.2" y1="519.0" x2="473.4" y2="526.5"/>
<line x1="485.2" y1="519.0" x2="492.9" y2="531.5"/>
<line x1="485.2" y1="519.0" x2="492.9" y2="531.5"/>
<line x1="493.4" y1="521.9" x2="483.1" y2="529.0"/>
<line x1="501.5" y1="524.8" x2="492.9" y2="531.5"/>
<line x1="493.4" y1="521.9" x2="502.6" y2="534.0"/>
<line x1="501.5" y1="524.8" x2="492.9" y2="531.5"/>
<line x1="501.5" y1="524.8" x2="512.3" y2="536.5"/>
<line x1="501.5" y1="524.8" x2="512.3" y2="536.5"/>
<line x1="509.6" y1="527.7" x2="502.6" y2="534.0"/>
<line x1="473.4" y1="526.5" x2="459.8" y2="535.6"/>
<line x1="473.4" y1="526.5" x2="482.0" y2="539.4"/>
<line x1="492.9" y1="531.5" x2="482.0" y2="539.4"/>
<line x1="492.9" y1="531.5" x2="504.2" y2="543.2"/>
<line x1="512.3" y1="536.5" x2="504.2" y2="543.2"/>
<line x1="459.8" y1="535.6" x2="471.4" y2="548.8"/>
<line x1="482.0" y1="539.4" x2="471.4" y2="548.8"/>
<line x1="482.0" y1="539.4" x2="495.0" y2="551.2"/>
<line x1="504.2" y1="543.2" x2="495.0" y2="551.2"/>
<line x1="504.2" y1="543.2" x2="518.7" y2="553.7"/>
<line x1="471.4" y1="548.8" x2="460.0" y2="559.7"/>
<line x1="471.4" y1="548.8" x2="485.0" y2="560.7"/>
<line x1="495.0" y1="551.2" x2="485.0" y2="560.7"/>
<line x1="495.0" y1="551.2" x2="510.0" y2="561.6"/>
<line x1="518.7" y1="553.7" x2="510.0" y2="561.6"/>
<line x1="460.0" y1="559.7" x2="473.6" y2="571.5"/>
<line x1="460.0" y1="559.7" x2="473.6" y2="571.5"/>
<line x1="472.5" y1="560.2" x2="460.3" y2="571.9"/>
<line x1="485.0" y1="560.7" x2="473.6" y2="571.5"/>
<line x1="472.5" y1="560.2" x2="486.8" y2="571.2"/>
<line x1="485.0" y1="560.7" x2="473.6" y2="571.5"/>
<line x1="485.0" y1="560.7" x2="500.1" y2="570.9"/>
<line x1="485.0" y1="560.7" x2="500.1" y2="570.9"/>
<line x1="497.5" y1="561.1" x2="486.8" y2="571.2"/>
<line x1="510.0" y1="561.6" x2="500.1" y2="570.9"/>
<line x1="497.5" y1="561.1" x2="513.3" y2="570.6"/>
<line x1="510.0" y1="561.6" x2="500.1" y2="570.9"/>
<line x1="510.0" y1="561.6" x2="526.6" y2="570.2"/>
<line x1="510.0" y1="561.6" x2="526.6" y2="570.2"/>
<line x1="522.5" y1="562.0" x2="513.3" y2="570.6"/>
<line x1="473.6" y1="571.5" x2="460.3" y2="584.0"/>
<line x1="473.6" y1="571.5" x2="488.9" y2="581.5"/>
<line x1="500.1" y1="570.9" x2="488.9" y2="581.5"/>
<line x1="500.1" y1="570.9" x2="517.5" y2="579.1"/>
<line x1="526.6" y1="570.2" x2="517.5" y2="579.1"/>
<line x1="460.3" y1="584.0" x2="478.0" y2="593.5"/>
<line x1="488.9" y1="581.5" x2="478.0" y2="593.5"/>
<line x1="488.9" y1="581.5" x2="507.6" y2="589.3"/>
<line x1="517.5" y1="579.1" x2="507.6" y2="589.3"/>
<line x1="517.5" y1="579.1" x2="537.2" y2="585.2"/>
<line x1="478.0" y1="593.5" x2="470.0" y2="605.6"/>
<line x1="478.0" y1="593.5" x2="499.4" y2="600.2"/>
<line x1="507.6" y1="589.3" x2="499.4" y2="600.2"/>
<line x1="507.6" y1="589.3" x2="528.7" y2="594.7"/>
<line x1="537.2" y1="585.2" x2="528.7" y2="594.7"/>
<line x1="460.3" y1="585.0" x2="468.2" y2="586.0"/>
<line x1="468.2" y1="586.0" x2="476.2" y2="587.0"/>
<line x1="476.2" y1="587.0" x2="484.1" y2="588.0"/>
<line x1="484.1" y1="588.0" x2="492.1" y2="589.0"/>
<line x1="492.1" y1="589.0" x2="500.0" y2="590.0"/>
<line x1="462.1" y1="593.9" x2="469.7" y2="594.7"/>
<line x1="469.7" y1="594.7" x2="477.3" y2="595.4"/>
<line x1="477.3" y1="595.4" x2="484.8" y2="596.2"/>
<line x1="484.8" y1="596.2" x2="492.4" y2="597.0"/>
<line x1="492.4" y1="597.0" x2="500.0" y2="597.8"/>
<line x1="467.1" y1="601.6" x2="473.7" y2="602.4"/>
<line x1="473.7" y1="602.4" x2="480.3" y2="603.1"/>
<line x1="480.3" y1="603.1" x2="486.9" y2="603.9"/>
<line x1="486.9" y1="603.9" x2="493.4" y2="604.7"/>
<line x1="493.4" y1="604.7" x2="500.0" y2="605.5"/>
<line x1="470.4" y1="609.8" x2="476.3" y2="610.5"/>
<line x1="476.3" y1="610.5" x2="482.3" y2="611.2"/>
<line x1="482.3" y1="611.2" x2="488.2" y2="611.9"/>
<line x1="488.2" y1="611.9" x2="494.1" y2="612.6"/>
<line x1="494.1" y1="612.6" x2="500.0" y2="613.2"/>
<line x1="471.4" y1="618.9" x2="477.1" y2="619.4"/>
<line x1="477.1" y1="619.4" x2="482.8" y2="619.8"/>
<line x1="482.8" y1="619.8" x2="488.5" y2="620.2"/>
<line x1="488.5" y1="620.2" x2="494.3" y2="620.6"/>
<line x1="494.3" y1="620.6" x2="500.0" y2="621.0"/>
<line x1="472.1" y1="628.1" x2="477.7" y2="628.2"/>
<line x1="477.7" y1="628.2" x2="483.2" y2="628.4"/>
<line x1="483.2" y1="628.4" x2="488.8" y2="628.5"/>
<line x1="488.8" y1="628.5" x2="494.4" y2="628.6"/>
<line x1="494.4" y1="628.6" x2="500.0" y2="628.8"/>
<line x1="472.7" y1="637.2" x2="478.2" y2="637.1"/>
<line x1="478.2" y1="637.1" x2="483.6" y2="636.9"/>
<line x1="483.6" y1="636.9" x2="489.1" y2="636.8"/>
<line x1="489.1" y1="636.8" x2="494.5" y2="636.6"/>
<line x1="494.5" y1="636.6" x2="500.0" y2="636.5"/>
<line x1="474.7" y1="646.1" x2="479.7" y2="645.7"/>
<line x1="479.7" y1="645.7" x2="484.8" y2="645.4"/>
<line x1="484.8" y1="645.4" x2="489.9" y2="645.0"/>
<line x1="489.9" y1="645.0" x2="494.9" y2="644.6"/>
<line x1="494.9" y1="644.6" x2="500.0" y2="644.2"/>
<line x1="477.9" y1="654.7" x2="482.3" y2="654.2"/>
<line x1="482.3" y1="654.2" x2="486.7" y2="653.6"/>
<line x1="486.7" y1="653.6" x2="491.2" y2="653.1"/>
<line x1="491.2" y1="653.1" x2="495.6" y2="652.5"/>
<line x1="495.6" y1="652.5" x2="500.0" y2="652.0"/>
<line x1="482.1" y1="662.8" x2="485.7" y2="662.2"/>
<line x1="485.7" y1="662.2" x2="489.3" y2="661.6"/>
<line x1="489.3" y1="661.6" x2="492.8" y2="661.0"/>
<line x1="492.8" y1="661.0" x2="496.4" y2="660.4"/>
<line x1="496.4" y1="660.4" x2="500.0" y2="659.8"/>
<line x1="487.2" y1="670.4" x2="489.8" y2="669.8"/>
<line x1="489.8" y1="669.8" x2="492.3" y2="669.3"/>
<line x1="492.3" y1="669.3" x2="494.9" y2="668.7"/>
<line x1="494.9" y1="668.7" x2="497.4" y2="668.1"/>
<line x1="497.4" y1="668.1" x2="500.0" y2="667.5"/>
<line x1="493.2" y1="677.3" x2="494.6" y2="676.9"/>
<line x1="494.6" y1="676.9" x2="495.9" y2="676.5"/>
<line x1="495.9" y1="676.5" x2="497.3" y2="676.1"/>
<line x1="497.3" y1="676.1" x2="498.6" y2="675.7"/>
<line x1="498.6" y1="675.7" x2="500.0" y2="675.2"/>
<line x1="499.7" y1="683.8" x2="499.8" y2="683.6"/>
<line x1="499.8" y1="683.6" x2="499.8" y2="683.5"/>
<line x1="499.8" y1="683.5" x2="499.9" y2="683.3"/>
<line x1="499.9" y1="683.3" x2="499.9" y2="683.2"/>
<line x1="499.9" y1="683.2" x2="500.0" y2="683.0"/>
<line x1="460.3" y1="585.0" x2="462.1" y2="593.9"/>
<line x1="462.1" y1="593.9" x2="467.1" y2="601.6"/>
<line x1="467.1" y1="601.6" x2="470.4" y2="609.8"/>
<line x1="470.4" y1="609.8" x2="471.4" y2="618.9"/>
<line x1="471.4" y1="618.9" x2="472.1" y2="628.1"/>
<line x1="472.1" y1="628.1" x2="472.7" y2="637.2"/>
<line x1="472.7" y1="637.2" x2="474.7" y2="646.1"/>
<line x1="474.7" y1="646.1" x2="477.9" y2="654.7"/>
<line x1="477.9" y1="654.7" x2="482.1" y2="662.8"/>
<line x1="482.1" y1="662.8" x2="487.2" y2="670.4"/>
<line x1="487.2" y1="670.4" x2="493.2" y2="677.3"/>
<line x1="493.2" y1="677.3" x2="499.7" y2="683.8"/>
<line x1="468.2" y1="586.0" x2="469.7" y2="594.7"/>
<line x1="469.7" y1="594.7" x2="473.7" y2="602.4"/>
<line x1="473.7" y1="602.4" x2="476.3" y2="610.5"/>
<line x1="476.3" y1="610.5" x2="477.1" y2="619.4"/>
<line x1="477.1" y1="619.4" x2="477.7" y2="628.2"/>
<line x1="477.7" y1="628.2" x2="478.2" y2="637.1"/>
<line x1="478.2" y1="637.1" x2="479.7" y2="645.7"/>
<line x1="479.7" y1="645.7" x2="482.3" y2="654.2"/>
<line x1="482.3" y1="654.2" x2="485.7" y2="662.2"/>
<line x1="485.7" y1="662.2" x2="489.8" y2="669.8"/>
<line x1="489.8" y1="669.8" x2="494.6" y2="676.9"/>
<line x1="494.6" y1="676.9" x2="499.8" y2="683.6"/>
<line x1="476.2" y1="587.0" x2="477.3" y2="595.4"/>
<line x1="477.3" y1="595.4" x2="480.3" y2="603.1"/>
<line x1="480.3" y1="603.1" x2="482.3" y2="611.2"/>
<line x1="482.3" y1="611.2" x2="482.8" y2="619.8"/>
<line x1="482.8" y1="619.8" x2="483.2" y2="628.4"/>
<line x1="483.2" y1="628.4" x2="483.6" y2="636.9"/>
<line x1="483.6" y1="636.9" x2="484.8" y2="645.4"/>
<line x1="484.8" y1="645.4" x2="486.7" y2="653.6"/>
<line x1="486.7" y1="653.6" x2="489.3" y2="661.6"/>
<line x1="489.3" y1="661.6" x2="492.3" y2="669.3"/>
<line x1="492.3" y1="669.3" x2="495.9" y2="676.5"/>
<line x1="495.9" y1="676.5" x2="499.8" y2="683.5"/>
<line x1="484.1" y1="588.0" x2="484.8" y2="596.2"/>
<line x1="484.8" y1="596.2" x2="486.9" y2="603.9"/>
<line x1="486.9" y1="603.9" x2="488.2" y2="611.9"/>
<line x1="488.2" y1="611.9" x2="488.5" y2="620.2"/>
<line x1="488.5" y1="620.2" x2="488.8" y2="628.5"/>
<line x1="488.8" y1="628.5" x2="489.1" y2="636.8"/>
<line x1="489.1" y1="636.8" x2="489.9" y2="645.0"/>
<line x1="489.9" y1="645.0" x2="491.2" y2="653.1"/>
<line x1="491.2" y1="653.1" x2="492.8" y2="661.0"/>
<line x1="492.8" y1="661.0" x2="494.9" y2="668.7"/>
<line x1="494.9" y1="668.7" x2="497.3" y2="676.1"/>
<line x1="497.3" y1="676.1" x2="499.9" y2="683.3"/>
<line x1="492.1" y1="589.0" x2="492.4" y2="597.0"/>
<line x1="492.4" y1="597.0" x2="493.4" y2="604.7"/>
<line x1="493.4" y1="604.7" x2="494.1" y2="612.6"/>
<line x1="494.1" y1="612.6" x2="494.3" y2="620.6"/>
<line x1="494.3" y1="620.6" x2="494.4" y2="628.6"/>
<line x1="494.4" y1="628.6" x2="494.5" y2="636.6"/>
<line x1="494.5" y1="636.6" x2="494.9" y2="644.6"/>
<line x1="494.9" y1="644.6" x2="495.6" y2="652.5"/>
<line x1="495.6" y1="652.5" x2="496.4" y2="660.4"/>
<line x1="496.4" y1="660.4" x2="497.4" y2="668.1"/>
<line x1="497.4" y1="668.1" x2="498.6" y2="675.7"/>
<line x1="498.6" y1="675.7" x2="499.9" y2="683.2"/>
<line x1="500.0" y1="590.0" x2="500.0" y2="597.8"/>
<line x1="500.0" y1="597.8" x2="500.0" y2="605.5"/>
<line x1="500.0" y1="605.5" x2="500.0" y2="613.2"/>
<line x1="500.0" y1="613.2" x2="500.0" y2="621.0"/>
<line x1="500.0" y1="621.0" x2="500.0" y2="628.8"/>
<line x1="500.0" y1="628.8" x2="500.0" y2="636.5"/>
<line x1="500.0" y1="636.5" x2="500.0" y2="644.2"/>
<line x1="500.0" y1="644.2" x2="500.0" y2="652.0"/>
<line x1="500.0" y1="652.0" x2="500.0" y2="659.8"/>
<line x1="500.0" y1="659.8" x2="500.0" y2="667.5"/>
<line x1="500.0" y1="667.5" x2="500.0" y2="675.2"/>
<line x1="500.0" y1="675.2" x2="500.0" y2="683.0"/>
<line x1="468.2" y1="586.0" x2="462.1" y2="593.9"/>
<line x1="468.2" y1="586.0" x2="477.3" y2="595.4"/>
<line x1="484.1" y1="588.0" x2="477.3" y2="595.4"/>
<line x1="484.1" y1="588.0" x2="492.4" y2="597.0"/>
<line x1="500.0" y1="590.0" x2="492.4" y2="597.0"/>
<line x1="462.1" y1="593.9" x2="473.7" y2="602.4"/>
<line x1="477.3" y1="595.4" x2="473.7" y2="602.4"/>
<line x1="477.3" y1="595.4" x2="486.9" y2="603.9"/>
<line x1="492.4" y1="597.0" x2="486.9" y2="603.9"/>
<line x1="492.4" y1="597.0" x2="500.0" y2="605.5"/>
<line x1="473.7" y1="602.4" x2="470.4" y2="609.8"/>
<line x1="473.7" y1="602.4" x2="482.3" y2="611.2"/>
<line x1="486.9" y1="603.9" x2="482.3" y2="611.2"/>
<line x1="486.9" y1="603.9" x2="494.1" y2="612.6"/>
<line x1="500.0" y1="605.5" x2="494.1" y2="612.6"/>
<line x1="470.4" y1="609.8" x2="477.1" y2="619.4"/>
<line x1="482.3" y1="611.2" x2="477.1" y2="619.4"/>
<line x1="482.3" y1="611.2" x2="488.5" y2="620.2"/>
<line x1="494.1" y1="612.6" x2="488.5" y2="620.2"/>
<line x1="494.1" y1="612.6" x2="500.0" y2="621.0"/>
<line x1="477.1" y1="619.4" x2="472.1" y2="628.1"/>
<line x1="477.1" y1="619.4" x2="483.2" y2="628.4"/>
<line x1="488.5" y1="620.2" x2="483.2" y2="628.4"/>
<line x1="488.5" y1="620.2" x2="494.4" y2="628.6"/>
<line x1="500.0" y1="621.0" x2="494.4" y2="628.6"/>
<line x1="472.1" y1="628.1" x2="478.2" y2="637.1"/>
<line x1="483.2" y1="628.4" x2="478.2" y2="637.1"/>
<line x1="483.2" y1="628.4" x2="489.1" y2="636.8"/>
<line x1="494.4" y1="628.6" x2="489.1" y2="636.8"/>
<line x1="494.4" y1="628.6" x2="500.0" y2="636.5"/>
<line x1="478.2" y1="637.1" x2="474.7" y2="646.1"/>
<line x1="478.2" y1="637.1" x2="484.8" y2="645.4"/>
<line x1="489.1" y1="636.8" x2="484.8" y2="645.4"/>
<line x1="489.1" y1="636.8" x2="494.9" y2="644.6"/>
<line x1="500.0" y1="636.5" x2="494.9" y2="644.6"/>
<line x1="474.7" y1="646.1" x2="482.3" y2="654.2"/>
<line x1="484.8" y1="645.4" x2="482.3" y2="654.2"/>
<line x1="484.8" y1="645.4" x2="491.2" y2="653.1"/>
<line x1="494.9" y1="644.6" x2="491.2" y2="653.1"/>
<line x1="494.9" y1="644.6" x2="500.0" y2="652.0"/>
<line x1="482.3" y1="654.2" x2="482.1" y2="662.8"/>
<line x1="482.3" y1="654.2" x2="489.3" y2="661.6"/>
<line x1="491.2" y1="653.1" x2="489.3" y2="661.6"/>
<line x1="491.2" y1="653.1" x2="496.4" y2="660.4"/>
<line x1="500.0" y1="652.0" x2="496.4" y2="660.4"/>
<line x1="482.1" y1="662.8" x2="489.8" y2="669.8"/>
<line x1="489.3" y1="661.6" x2="489.8" y2="669.8"/>
<line x1="489.3" y1="661.6" x2="494.9" y2="668.7"/>
<line x1="496.4" y1="660.4" x2="494.9" y2="668.7"/>
<line x1="496.4" y1="660.4" x2="500.0" y2="667.5"/>
<line x1="489.8" y1="669.8" x2="493.2" y2="677.3"/>
<line x1="489.8" y1="669.8" x2="495.9" y2="676.5"/>
<line x1="494.9" y1="668.7" x2="495.9" y2="676.5"/>
<line x1="494.9" y1="668.7" x2="498.6" y2="675.7"/>
<line x1="500.0" y1="667.5" x2="498.6" y2="675.7"/>
<line x1="493.2" y1="677.3" x2="499.8" y2="683.6"/>
<line x1="495.9" y1="676.5" x2="499.8" y2="683.6"/>
<line x1="495.9" y1="676.5" x2="499.9" y2="683.3"/>
<line x1="498.6" y1="675.7" x2="499.9" y2="683.3"/>
<line x1="498.6" y1="675.7" x2="500.0" y2="683.0"/>
<line x1="499.0" y1="600.0" x2="499.0" y2="700.0"/>
<line x1="500.0" y1="600.0" x2="500.0" y2="701.0"/>
<line x1="501.0" y1="600.0" x2="501.0" y2="702.0"/>
<line x1="502.0" y1="600.0" x2="502.0" y2="703.0"/>
<line x1="510.5" y1="600.0" x2="510.5" y2="711.5"/>
<line x1="511.5" y1="600.0" x2="511.5" y2="712.5"/>
<line x1="526.5" y1="600.0" x2="526.5" y2="727.5"/>
<line x1="527.5" y1="600.0" x2="527.5" y2="728.5"/>
<line x1="528.5" y1="600.0" x2="528.5" y2="729.5"/>
<line x1="529.5" y1="600.0" x2="529.5" y2="730.5"/>
<line x1="512.0" y1="600.0" x2="527.8" y2="596.0"/>
<line x1="527.8" y1="596.0" x2="543.4" y2="592.0"/>
<line x1="512.5" y1="600.0" x2="528.1" y2="602.0"/>
<line x1="528.1" y1="602.0" x2="512.5" y2="611.2"/>
<line x1="528.0" y1="596.0" x2="512.5" y2="600.0"/>
<line x1="528.0" y1="596.0" x2="542.8" y2="598.1"/>
<line x1="542.8" y1="598.1" x2="528.2" y2="608.0"/>
<line x1="543.4" y1="592.0" x2="528.0" y2="596.0"/>
<line x1="512.5" y1="611.2" x2="528.2" y2="614.0"/>
<line x1="528.2" y1="614.0" x2="512.5" y2="622.5"/>
<line x1="528.2" y1="608.0" x2="541.6" y2="610.2"/>
<line x1="541.6" y1="610.2" x2="528.3" y2="620.0"/>
<line x1="512.5" y1="622.5" x2="528.4" y2="626.0"/>
<line x1="528.4" y1="626.0" x2="512.5" y2="633.8"/>
<line x1="528.3" y1="620.0" x2="512.5" y2="622.5"/>
<line x1="528.3" y1="620.0" x2="540.4" y2="622.4"/>
<line x1="540.4" y1="622.4" x2="528.5" y2="632.0"/>
<line x1="541.0" y1="616.3" x2="528.3" y2="620.0"/>
<line x1="512.5" y1="633.8" x2="528.6" y2="638.0"/>
<line x1="528.6" y1="638.0" x2="512.5" y2="645.0"/>
<line x1="528.5" y1="632.0" x2="539.5" y2="634.6"/>
<line x1="539.5" y1="634.6" x2="528.7" y2="644.0"/>
<line x1="512.5" y1="645.0" x2="528.8" y2="650.0"/>
<line x1="528.8" y1="650.0" x2="512.5" y2="656.2"/>
<line x1="528.7" y1="644.0" x2="512.5" y2="645.0"/>
<line x1="528.7" y1="644.0" x2="539.5" y2="646.8"/>
<line x1="539.5" y1="646.8" x2="528.8" y2="656.0"/>
<line x1="539.5" y1="640.7" x2="528.7" y2="644.0"/>
<line x1="512.5" y1="656.2" x2="528.9" y2="662.0"/>
<line x1="528.9" y1="662.0" x2="512.5" y2="667.5"/>
<line x1="528.8" y1="656.0" x2="539.5" y2="659.0"/>
<line x1="539.5" y1="659.0" x2="529.0" y2="668.0"/>
<line x1="512.5" y1="667.5" x2="529.1" y2="674.0"/>
<line x1="529.1" y1="674.0" x2="512.5" y2="678.8"/>
<line x1="529.0" y1="668.0" x2="512.5" y2="667.5"/>
<line x1="529.0" y1="668.0" x2="540.6" y2="671.1"/>
<line x1="540.6" y1="671.1" x2="529.2" y2="680.0"/>
<line x1="540.0" y1="665.1" x2="529.0" y2="668.0"/>
<line x1="512.5" y1="678.8" x2="529.2" y2="686.0"/>
<line x1="529.2" y1="686.0" x2="512.5" y2="690.0"/>
<line x1="529.2" y1="680.0" x2="541.8" y2="683.3"/>
<line x1="541.8" y1="683.3" x2="529.3" y2="692.0"/>
<line x1="512.5" y1="690.0" x2="529.4" y2="698.0"/>
<line x1="529.4" y1="698.0" x2="512.5" y2="701.2"/>
<line x1="529.3" y1="692.0" x2="512.5" y2="690.0"/>
<line x1="529.3" y1="692.0" x2="543.5" y2="695.4"/>
<line x1="543.5" y1="695.4" x2="529.5" y2="704.0"/>
<line x1="542.6" y1="689.4" x2="529.3" y2="692.0"/>
<line x1="512.5" y1="701.2" x2="529.6" y2="710.0"/>
<line x1="529.6" y1="710.0" x2="512.5" y2="712.5"/>
<line x1="529.5" y1="704.0" x2="545.1" y2="707.5"/>
<line x1="545.1" y1="707.5" x2="529.7" y2="716.0"/>
<line x1="512.5" y1="712.5" x2="529.8" y2="722.0"/>
<line x1="529.8" y1="722.0" x2="512.5" y2="723.8"/>
<line x1="529.7" y1="716.0" x2="512.5" y2="712.5"/>
<line x1="529.7" y1="716.0" x2="546.9" y2="719.6"/>
<line x1="546.9" y1="719.6" x2="529.8" y2="728.0"/>
<line x1="546.0" y1="713.6" x2="529.7" y2="716.0"/>
<line x1="512.5" y1="723.8" x2="529.9" y2="734.0"/>
<line x1="529.9" y1="734.0" x2="512.5" y2="735.0"/>
<line x1="529.8" y1="728.0" x2="548.8" y2="731.7"/>
<line x1="548.8" y1="731.7" x2="530.0" y2="740.0"/>
<line x1="528.0" y1="596.0" x2="530.0" y2="740.0"/>
<line x1="502.0" y1="612.0" x2="511.0" y2="618.0"/>
<line x1="511.0" y1="618.0" x2="502.0" y2="624.0"/>
<line x1="502.0" y1="624.0" x2="511.0" y2="630.0"/>
<line x1="511.0" y1="630.0" x2="502.0" y2="636.0"/>
<line x1="502.0" y1="636.0" x2="511.0" y2="642.0"/>
<line x1="511.0" y1="642.0" x2="502.0" y2="648.0"/>
<line x1="502.0" y1="648.0" x2="511.0" y2="654.0"/>
<line x1="511.0" y1="654.0" x2="502.0" y2="660.0"/>
<line x1="502.0" y1="660.0" x2="511.0" y2="666.0"/>
<line x1="511.0" y1="666.0" x2="502.0" y2="672.0"/>
<line x1="502.0" y1="672.0" x2="511.0" y2="678.0"/>
<line x1="511.0" y1="678.0" x2="502.0" y2="684.0"/>
<line x1="502.0" y1="684.0" x2="511.0" y2="690.0"/>
<line x1="511.0" y1="690.0" x2="502.0" y2="696.0"/>
<line x1="457.7" y1="642.9" x2="452.2" y2="647.7"/>
<line x1="452.2" y1="647.7" x2="446.9" y2="652.7"/>
<line x1="446.9" y1="652.7" x2="442.0" y2="658.4"/>
<line x1="442.0" y1="658.4" x2="438.5" y2="666.2"/>
<line x1="438.5" y1="666.2" x2="438.5" y2="674.7"/>
<line x1="438.5" y1="674.7" x2="443.1" y2="681.7"/>
<line x1="443.1" y1="681.7" x2="450.5" y2="686.1"/>
<line x1="450.5" y1="686.1" x2="458.5" y2="689.2"/>
<line x1="458.5" y1="689.2" x2="466.7" y2="691.9"/>
<line x1="466.7" y1="691.9" x2="475.0" y2="694.6"/>
<line x1="475.0" y1="694.6" x2="483.5" y2="696.3"/>
<line x1="483.5" y1="696.3" x2="492.1" y2="697.9"/>
<line x1="492.1" y1="697.9" x2="500.4" y2="699.5"/>
<line x1="500.4" y1="699.5" x2="508.3" y2="701.4"/>
<line x1="457.9" y1="642.8" x2="454.1" y2="646.9"/>
<line x1="454.1" y1="646.9" x2="450.5" y2="651.1"/>
<line x1="450.5" y1="651.1" x2="447.1" y2="656.2"/>
<line x1="447.1" y1="656.2" x2="444.2" y2="663.8"/>
<line x1="444.2" y1="663.8" x2="444.3" y2="672.1"/>
<line x1="444.3" y1="672.1" x2="448.6" y2="678.9"/>
<line x1="448.6" y1="678.9" x2="455.4" y2="683.4"/>
<line x1="455.4" y1="683.4" x2="462.8" y2="686.9"/>
<line x1="462.8" y1="686.9" x2="470.6" y2="689.9"/>
<line x1="470.6" y1="689.9" x2="478.3" y2="692.9"/>
<line x1="478.3" y1="692.9" x2="486.5" y2="694.8"/>
<line x1="486.5" y1="694.8" x2="494.7" y2="696.6"/>
<line x1="494.7" y1="696.6" x2="502.3" y2="698.6"/>
<line x1="502.3" y1="698.6" x2="509.1" y2="701.1"/>
<line x1="458.1" y1="642.7" x2="456.0" y2="646.1"/>
<line x1="456.0" y1="646.1" x2="454.2" y2="649.6"/>
<line x1="454.2" y1="649.6" x2="452.2" y2="653.9"/>
<line x1="452.2" y1="653.9" x2="449.9" y2="661.4"/>
<line x1="449.9" y1="661.4" x2="450.1" y2="669.4"/>
<line x1="450.1" y1="669.4" x2="454.1" y2="676.1"/>
<line x1="454.1" y1="676.1" x2="460.4" y2="680.8"/>
<line x1="460.4" y1="680.8" x2="467.2" y2="684.6"/>
<line x1="467.2" y1="684.6" x2="474.4" y2="687.9"/>
<line x1="474.4" y1="687.9" x2="481.7" y2="691.1"/>
<line x1="481.7" y1="691.1" x2="489.4" y2="693.3"/>
<line x1="489.4" y1="693.3" x2="497.3" y2="695.2"/>
<line x1="497.3" y1="695.2" x2="504.2" y2="697.6"/>
<line x1="504.2" y1="697.6" x2="509.9" y2="700.8"/>
<line x1="458.2" y1="642.6" x2="458.0" y2="645.3"/>
<line x1="458.0" y1="645.3" x2="457.8" y2="648.0"/>
<line x1="457.8" y1="648.0" x2="457.4" y2="651.7"/>
<line x1="457.4" y1="651.7" x2="455.7" y2="659.0"/>
<line x1="455.7" y1="659.0" x2="455.9" y2="666.7"/>
<line x1="455.9" y1="666.7" x2="459.6" y2="673.3"/>
<line x1="459.6" y1="673.3" x2="465.4" y2="678.1"/>
<line x1="465.4" y1="678.1" x2="471.6" y2="682.3"/>
<line x1="471.6" y1="682.3" x2="478.3" y2="685.8"/>
<line x1="478.3" y1="685.8" x2="485.0" y2="689.4"/>
<line x1="485.0" y1="689.4" x2="492.3" y2="691.8"/>
<line x1="492.3" y1="691.8" x2="499.9" y2="693.8"/>
<line x1="499.9" y1="693.8" x2="506.2" y2="696.6"/>
<line x1="506.2" y1="696.6" x2="510.6" y2="700.5"/>
<line x1="458.4" y1="642.6" x2="459.9" y2="644.5"/>
<line x1="459.9" y1="644.5" x2="461.4" y2="646.5"/>
<line x1="461.4" y1="646.5" x2="462.5" y2="649.5"/>
<line x1="462.5" y1="649.5" x2="461.4" y2="656.6"/>
<line x1="461.4" y1="656.6" x2="461.7" y2="664.0"/>
<line x1="461.7" y1="664.0" x2="465.1" y2="670.4"/>
<line x1="465.1" y1="670.4" x2="470.3" y2="675.5"/>
<line x1="470.3" y1="675.5" x2="475.9" y2="680.0"/>
<line x1="475.9" y1="680.0" x2="482.1" y2="683.8"/>
<line x1="482.1" y1="683.8" x2="488.4" y2="687.7"/>
<line x1="488.4" y1="687.7" x2="495.3" y2="690.3"/>
<line x1="495.3" y1="690.3" x2="502.5" y2="692.5"/>
<line x1="502.5" y1="692.5" x2="508.1" y2="695.6"/>
<line x1="508.1" y1="695.6" x2="511.4" y2="700.3"/>
<line x1="458.6" y1="642.5" x2="461.8" y2="643.7"/>
<line x1="461.8" y1="643.7" x2="465.1" y2="644.9"/>
<line x1="465.1" y1="644.9" x2="467.6" y2="647.2"/>
<line x1="467.6" y1="647.2" x2="467.1" y2="654.2"/>
<line x1="467.1" y1="654.2" x2="467.5" y2="661.4"/>
<line x1="467.5" y1="661.4" x2="470.6" y2="667.6"/>
<line x1="470.6" y1="667.6" x2="475.3" y2="672.8"/>
<line x1="475.3" y1="672.8" x2="480.3" y2="677.7"/>
<line x1="480.3" y1="677.7" x2="486.0" y2="681.8"/>
<line x1="486.0" y1="681.8" x2="491.7" y2="685.9"/>
<line x1="491.7" y1="685.9" x2="498.2" y2="688.8"/>
<line x1="498.2" y1="688.8" x2="505.0" y2="691.1"/>
<line x1="505.0" y1="691.1" x2="510.0" y2="694.7"/>
<line x1="510.0" y1="694.7" x2="512.2" y2="700.0"/>
<line x1="458.8" y1="642.4" x2="463.7" y2="642.9"/>
<line x1="463.7" y1="642.9" x2="468.7" y2="643.4"/>
<line x1="468.7" y1="643.4" x2="472.8" y2="645.0"/>
<line x1="472.8" y1="645.0" x2="472.8" y2="651.8"/>
<line x1="472.8" y1="651.8" x2="473.3" y2="658.7"/>
<line x1="473.3" y1="658.7" x2="476.1" y2="664.8"/>
<line x1="476.1" y1="664.8" x2="480.3" y2="670.2"/>
<line x1="480.3" y1="670.2" x2="484.7" y2="675.3"/>
<line x1="484.7" y1="675.3" x2="489.9" y2="679.8"/>
<line x1="489.9" y1="679.8" x2="495.1" y2="684.2"/>
<line x1="495.1" y1="684.2" x2="501.2" y2="687.2"/>
<line x1="501.2" y1="687.2" x2="507.6" y2="689.8"/>
<line x1="507.6" y1="689.8" x2="511.9" y2="693.7"/>
<line x1="511.9" y1="693.7" x2="513.0" y2="699.7"/>
<line x1="457.5" y1="643.0" x2="459.0" y2="642.3"/>
<line x1="432.8" y1="668.6" x2="478.5" y2="649.4"/>
<line x1="454.1" y1="691.6" x2="489.0" y2="673.0"/>
<line x1="489.5" y1="699.3" x2="510.2" y2="688.4"/>
<line x1="507.5" y1="701.7" x2="490.3" y2="699.4"/>
<line x1="490.3" y1="699.4" x2="471.6" y2="696.3"/>
<line x1="471.6" y1="696.3" x2="451.3" y2="690.8"/>
<line x1="451.3" y1="690.8" x2="440.3" y2="686.9"/>
<line x1="440.3" y1="686.9" x2="433.3" y2="680.6"/>
<line x1="433.3" y1="680.6" x2="431.7" y2="671.3"/>
<line x1="431.7" y1="671.3" x2="435.6" y2="661.9"/>
<line x1="435.6" y1="661.9" x2="445.0" y2="652.5"/>
<line x1="445.0" y1="652.5" x2="457.5" y2="643.0"/>
<line x1="508.3" y1="702.9" x2="491.1" y2="700.6"/>
<line x1="491.1" y1="700.6" x2="472.4" y2="697.5"/>
<line x1="472.4" y1="697.5" x2="452.1" y2="692.0"/>
<line x1="452.1" y1="692.0" x2="441.1" y2="688.1"/>
<line x1="441.1" y1="688.1" x2="434.1" y2="681.8"/>
<line x1="434.1" y1="681.8" x2="432.5" y2="672.5"/>
<line x1="432.5" y1="672.5" x2="436.4" y2="663.1"/>
<line x1="436.4" y1="663.1" x2="445.8" y2="653.7"/>
<line x1="445.8" y1="653.7" x2="458.3" y2="644.2"/>
<line x1="509.0" y1="704.1" x2="491.8" y2="701.8"/>
<line x1="491.8" y1="701.8" x2="473.1" y2="698.7"/>
<line x1="473.1" y1="698.7" x2="452.8" y2="693.2"/>
<line x1="452.8" y1="693.2" x2="441.8" y2="689.3"/>
<line x1="441.8" y1="689.3" x2="434.8" y2="683.0"/>
<line x1="434.8" y1="683.0" x2="433.2" y2="673.7"/>
<line x1="433.2" y1="673.7" x2="437.1" y2="664.3"/>
<line x1="437.1" y1="664.3" x2="446.5" y2="654.9"/>
<line x1="446.5" y1="654.9" x2="459.0" y2="645.4"/>
<line x1="507.5" y1="701.7" x2="520.0" y2="712.0"/>
<line x1="520.0" y1="712.0" x2="532.5" y2="724.4"/>
<line x1="532.5" y1="724.4" x2="549.7" y2="737.7"/>
<line x1="507.5" y1="703.5" x2="520.0" y2="714.0"/>
<line x1="520.0" y1="714.0" x2="532.5" y2="726.4"/>
<line x1="532.5" y1="726.4" x2="547.0" y2="739.0"/>
<line x1="431.7" y1="675.0" x2="431.3" y2="680.6"/>
<line x1="433.0" y1="681.5" x2="434.1" y2="686.8"/>
<line x1="431.7" y1="675.0" x2="434.1" y2="686.8"/>
<line x1="437.1" y1="686.5" x2="437.9" y2="692.3"/>
<line x1="433.0" y1="681.5" x2="437.9" y2="692.3"/>
<line x1="442.5" y1="690.3" x2="442.7" y2="697.1"/>
<line x1="437.1" y1="686.5" x2="442.7" y2="697.1"/>
<line x1="448.8" y1="692.6" x2="447.9" y2="701.3"/>
<line x1="442.5" y1="690.3" x2="447.9" y2="701.3"/>
<line x1="455.1" y1="694.5" x2="453.5" y2="705.1"/>
<line x1="448.8" y1="692.6" x2="453.5" y2="705.1"/>
<line x1="461.6" y1="696.3" x2="459.1" y2="708.9"/>
<line x1="455.1" y1="694.5" x2="459.1" y2="708.9"/>
<line x1="468.0" y1="698.0" x2="465.1" y2="712.1"/>
<line x1="461.6" y1="696.3" x2="465.1" y2="712.1"/>
<line x1="474.5" y1="699.5" x2="471.1" y2="715.2"/>
<line x1="468.0" y1="698.0" x2="471.1" y2="715.2"/>
<line x1="481.1" y1="700.8" x2="477.1" y2="718.4"/>
<line x1="474.5" y1="699.5" x2="477.1" y2="718.4"/>
<line x1="487.6" y1="702.0" x2="483.1" y2="721.6"/>
<line x1="481.1" y1="700.8" x2="483.1" y2="721.6"/>
<line x1="494.2" y1="703.1" x2="489.1" y2="724.8"/>
<line x1="487.6" y1="702.0" x2="489.1" y2="724.8"/>
<line x1="500.8" y1="704.0" x2="495.0" y2="728.0"/>
<line x1="494.2" y1="703.1" x2="495.0" y2="728.0"/>
<line x1="507.5" y1="705.0" x2="501.0" y2="731.2"/>
<line x1="500.8" y1="704.0" x2="501.0" y2="731.2"/>
<line x1="512.7" y1="709.1" x2="507.0" y2="734.3"/>
<line x1="507.5" y1="705.0" x2="507.0" y2="734.3"/>
<line x1="517.9" y1="713.3" x2="513.2" y2="737.1"/>
<line x1="512.7" y1="709.1" x2="513.2" y2="737.1"/>
<line x1="522.9" y1="717.8" x2="519.4" y2="739.9"/>
<line x1="517.9" y1="713.3" x2="519.4" y2="739.9"/>
<line x1="527.7" y1="722.4" x2="525.5" y2="742.7"/>
<line x1="522.9" y1="717.8" x2="525.5" y2="742.7"/>
<line x1="532.5" y1="727.0" x2="531.7" y2="745.5"/>
<line x1="527.7" y1="722.4" x2="531.7" y2="745.5"/>
<line x1="531.7" y1="745.5" x2="532.5" y2="727.0"/>
<line x1="531.7" y1="745.5" x2="528.0" y2="700.0"/>
<line x1="530.5" y1="745.0" x2="527.0" y2="700.0"/>
<line x1="431.5" y1="677.8" x2="433.6" y2="684.2"/>
<line x1="433.6" y1="684.2" x2="437.5" y2="689.4"/>
<line x1="437.5" y1="689.4" x2="442.6" y2="693.7"/>
<line x1="442.6" y1="693.7" x2="448.3" y2="697.0"/>
<line x1="448.3" y1="697.0" x2="454.3" y2="699.8"/>
<line x1="454.3" y1="699.8" x2="460.4" y2="702.6"/>
<line x1="460.4" y1="702.6" x2="466.6" y2="705.0"/>
<line x1="466.6" y1="705.0" x2="472.8" y2="707.4"/>
<line x1="472.8" y1="707.4" x2="479.1" y2="709.6"/>
<line x1="479.1" y1="709.6" x2="485.4" y2="711.8"/>
<line x1="485.4" y1="711.8" x2="491.6" y2="713.9"/>
<line x1="491.6" y1="713.9" x2="497.9" y2="716.0"/>
<line x1="497.9" y1="716.0" x2="504.2" y2="718.1"/>
<line x1="504.2" y1="718.1" x2="509.9" y2="721.7"/>
<line x1="509.9" y1="721.7" x2="515.5" y2="725.2"/>
<line x1="515.5" y1="725.2" x2="521.1" y2="728.8"/>
<line x1="521.1" y1="728.8" x2="526.6" y2="732.5"/>
<line x1="526.6" y1="732.5" x2="532.1" y2="736.2"/>
<line x1="515.5" y1="475.2" x2="506.0" y2="492.0"/>
<line x1="515.5" y1="475.2" x2="509.0" y2="497.0"/>
<line x1="515.5" y1="475.2" x2="502.8" y2="499.0"/>
<line x1="514.5" y1="478.0" x2="504.0" y2="501.0"/>
<line x1="503.5" y1="499.0" x2="505.7" y2="511.6"/>
<line x1="505.7" y1="511.6" x2="509.7" y2="525.6"/>
<line x1="509.7" y1="525.6" x2="514.5" y2="541.3"/>
<line x1="514.5" y1="541.3" x2="520.7" y2="556.9"/>
<line x1="520.7" y1="556.9" x2="526.7" y2="569.4"/>
<line x1="526.7" y1="569.4" x2="536.3" y2="583.4"/>
<line x1="536.3" y1="583.4" x2="544.1" y2="592.0"/>
<line x1="503.5" y1="499.0" x2="514.7" y2="487.0"/>
<line x1="504.2" y1="499.0" x2="506.4" y2="511.6"/>
<line x1="506.4" y1="511.6" x2="510.4" y2="525.6"/>
<line x1="510.4" y1="525.6" x2="515.2" y2="541.3"/>
<line x1="515.2" y1="541.3" x2="521.4" y2="556.9"/>
<line x1="521.4" y1="556.9" x2="527.4" y2="569.4"/>
<line x1="527.4" y1="569.4" x2="537.0" y2="583.4"/>
<line x1="537.0" y1="583.4" x2="544.8" y2="592.0"/>
<line x1="504.2" y1="499.0" x2="515.4" y2="487.0"/>
</g>
<polygon points="434.0,633.8 451.0,632.0 466.9,629.8 472.0,626.4 485.0,620.0 498.6,613.7 498.6,622.5 479.0,634.2 464.4,639.0 451.0,639.5 435.6,637.5" fill="#0202ee" stroke="#0000ff" stroke-width="1" />
<polyline points="441.3,634.9 444.7,634.8 448.1,634.8 451.5,634.6 454.9,634.3 458.3,633.9 461.7,633.6 465.0,633.1 468.2,632.1 471.2,630.5 474.3,629.0 477.4,627.6 480.4,626.1 483.4,624.5 486.5,622.9 489.5,621.4 492.5,619.9 495.6,618.3 498.6,616.8" fill="none" stroke="#06061c" stroke-width="1" stroke-dasharray="2 3" shape-rendering="crispEdges"/>
<polyline points="441.7,636.2 445.1,636.4 448.4,636.5 451.8,636.5 455.2,636.2 458.5,635.9 461.9,635.7 465.3,635.2 468.4,634.2 471.5,632.8 474.6,631.5 477.8,630.2 480.8,628.7 483.7,627.1 486.7,625.4 489.7,623.8 492.6,622.2 495.6,620.6 498.6,619.0" fill="none" stroke="#06061c" stroke-width="1" stroke-dasharray="3 2" shape-rendering="crispEdges"/>
<polyline points="442.0,637.3 445.3,637.6 448.7,637.9 452.0,638.0 455.4,637.8 458.8,637.6 462.1,637.4 465.4,636.9 468.6,635.9 471.7,634.6 474.9,633.5 478.1,632.3 481.0,630.8 484.0,629.1 486.9,627.4 489.8,625.7 492.7,624.1 495.7,622.4 498.6,620.7" fill="none" stroke="#06061c" stroke-width="1" stroke-dasharray="2 4" shape-rendering="crispEdges"/>
</svg>
<!-- right command panel -->
<div class="a" style="left:1066px;top:72px;width:2px;height:846px;background:#fbfaf2"></div>
<div class="a" style="left:1071px;top:74px;width:1px;height:900px;background:#808080"></div>
<div class="a" style="left:1068px;top:73px;width:212px;height:1px;background:#f4f2e6"></div>
<div class="a" style="left:1074px;top:78px;width:188px;height:2px;border-top:1px solid #d0d0d0;border-bottom:1px solid #808080"></div>
<div class="a" style="left:1074px;top:82px;width:188px;height:2px;border-top:1px solid #d0d0d0;border-bottom:1px solid #808080"></div>
<div class="xbtn" style="left:1266px;top:75px"><svg class="a" style="left:0;top:0" width="10" height="10"><path d="M1.5 1.5 L8.5 8.5" stroke="#fff" stroke-width="1.8"/><path d="M8.5 1.500 L1.500 8.500" stroke="#fff" stroke-width="1.800"/><path d="M1.500 1.500 l2 2 M8.500 1.500 l-2 2 M1.500 8.500 l2 -2" stroke="#200000" stroke-width="1" stroke-dasharray="1 1"/></svg></div>
<div class="cmdhead" style="top:90px">Create...</div>
<div class="cmd" style="top:109px">Copy</div>
<div class="cbox" style="top:109px"></div>
<div class="cmd" style="top:126px">Light...</div>
<div class="cmd" style="top:143px">Polygon...</div>
<div class="cbox" style="top:143px"></div>
<div class="cmd" style="top:160px">Skeleton...</div>
<div class="cmd" style="top:177px">Spline...</div>
<div class="cmd" style="top:194px">Surface...</div>
<div class="cbox" style="top:194px"></div>
<div class="cmdhead" style="top:209px">Display...</div>
<div class="cmd" style="top:228px">Disable</div>
<div class="cmd" style="top:245px">Enable</div>
<div class="cmd" style="top:262px">Hide</div>
<div class="cmd" style="top:279px">Local Axes...</div>
<div class="cbox" style="top:279px"></div>
<div class="cmd" style="top:296px">Show</div>
<div class="cmd" style="top:313px">[By Name]</div>
<div class="cmdhead" style="top:328px">Modify...</div>
<div class="cmd" style="top:347px">Align...</div>
<div class="cmd" style="top:364px">Attach</div>
<div class="cbox" style="top:364px"></div>
<div class="cmd" style="top:381px">Break</div>
<div class="cmd" style="top:398px">Connect</div>
<div class="cmd" style="top:415px">Delete</div>
<div class="cbox" style="top:415px"></div>
<div class="cmd" style="top:432px">Exact Transform</div>
<div class="cmd" style="top:449px">FFD</div>
<div class="cbox" style="top:449px"></div>
<div class="cmd" style="top:466px">Flip</div>
<div class="cmd" style="top:483px">Insert</div>
<div class="cbox" style="top:483px"></div>
<div class="cmd" style="top:500px">Mirror</div>
<div class="cbox" style="top:500px"></div>
<div class="cmd" style="top:517px">Move</div>
<div class="cbox" style="top:517px"></div>
<div class="cmd" style="top:534px">Rotate</div>
<div class="cbox" style="top:534px"></div>
<div class="cmd" style="top:551px">Scale</div>
<div class="cbox" style="top:551px"></div>
<div class="cmd" style="top:568px">Submesh...</div>
<div class="cmd" style="left:1081px;top:585px">Select...</div>
<div class="cmd" style="left:1081px;top:602px">Surface...</div>
<div class="a" style="left:1266px;top:100px;width:1px;height:860px;background:#d4d4d4"></div>
<div class="a" style="left:1277px;top:88px;width:1px;height:884px;background:#808080"></div>
<div class="a rais" style="left:1266px;top:88px;width:12px;height:12px"><svg class="a" style="left:1px;top:2px" width="9" height="6"><path d="M0.5 5 L4.5 1 L8.5 5 Z" fill="#000"/></svg></div>
<div class="a rais" style="left:1266px;top:960px;width:12px;height:12px"><svg class="a" style="left:1px;top:3px" width="9" height="6"><path d="M0.5 1 L4.5 5 L8.5 1 Z" fill="#000"/></svg></div>
<div class="a" style="left:1269px;top:527px;width:6px;height:7px;background:repeating-linear-gradient(to bottom,#000 0,#000 1px,transparent 1px,transparent 2px)"></div>
<!-- message panel -->
<div class="a" style="left:239px;top:921px;width:827px;height:1px;background:#b8b4a4"></div>
<div class="xbtn" style="left:238px;top:922px"><svg class="a" style="left:0;top:0" width="10" height="10"><path d="M1.5 1.5 L8.5 8.5" stroke="#fff" stroke-width="1.8"/><path d="M8.5 1.500 L1.500 8.500" stroke="#fff" stroke-width="1.800"/><path d="M1.500 1.500 l2 2 M8.500 1.500 l-2 2 M1.500 8.500 l2 -2" stroke="#200000" stroke-width="1" stroke-dasharray="1 1"/></svg></div>
<div class="a" style="left:241px;top:936px;width:2px;height:35px;border-left:1px solid #d0d0d0;border-right:1px solid #808080"></div>
<div class="a" style="left:245px;top:936px;width:2px;height:35px;border-left:1px solid #d0d0d0;border-right:1px solid #808080"></div>
<div class="a" style="left:251px;top:923px;width:815px;height:49px;background:#fff;border:1px solid;border-color:#808080 #f4f2e6 #f4f2e6 #808080"></div>
<div class="a" style="left:253px;top:954px;width:795px;height:17px;background:linear-gradient(to bottom,#f3f2ea,#fdfdfa)"></div>
<div class="a" style="left:1048px;top:925px;width:16px;height:45px;background:#ece9d8"></div>
<div class="a t11" id="msg" style="left:254px;top:927px">Performing autosave to "e:\всё для конверта\программы\zmodeler\zmodeler 2.2.2 build 964_export_iv_makcend/Autosave/248_autosave1.z3d"</div>
<!-- scrollbars -->
<div class="a sbtn" style="left:253px;top:954px;width:17px;height:17px"><svg class="a" style="left:0;top:0" width="14" height="14"><path d="M8.5 3.5 L5 7 L8.5 10.5" fill="none" stroke="#4d6185" stroke-width="2"/></svg></div>
<div class="a sbtn" style="left:1030px;top:954px;width:17px;height:17px"><svg class="a" style="left:0;top:0" width="14" height="14"><path d="M5.5 3.5 L9 7 L5.5 10.5" fill="none" stroke="#4d6185" stroke-width="2"/></svg></div>
<div class="a sbtn" style="left:301px;top:954px;width:652px;height:17px"><div class="a" style="left:319px;top:4px;width:8px;height:6px;background:repeating-linear-gradient(to right,#eef4fe 0,#eef4fe 1px,#8cb0f8 1px,#8cb0f8 2px)"></div></div>
<div class="a sbtn" style="left:1049px;top:926px;width:14px;height:12px"><svg class="a" style="left:0;top:0" width="12" height="10"><path d="M3 6.5 L6 3.5 L9 6.5" fill="none" stroke="#4d6185" stroke-width="1.8"/></svg></div>
<div class="a sbtn" style="left:1049px;top:940px;width:14px;height:12px"><svg class="a" style="left:0;top:0" width="12" height="10"><path d="M3 3.5 L6 6.5 L9 3.5" fill="none" stroke="#4d6185" stroke-width="1.8"/></svg></div>
<!-- status bar -->
<div class="a" style="left:0;top:974px;width:1280px;height:1px;background:#aca899"></div>
<div class="a" style="left:0;top:975px;width:1280px;height:1px;background:#fff"></div>
<div class="a" style="left:0;top:976px;width:1280px;height:1px;background:#909090"></div>
<div class="a" style="left:2px;top:978px;width:1px;height:14px;background:#e8e8e0"></div>
<div class="a t12" id="stat" style="left:9px;top:980px;font-size:12.5px;word-spacing:1.5px">Click on source and then click on destination object. Source object will be attached to destination.</div>
<div class="a" style="left:893px;top:978px;width:37px;height:15px;background:#ece9d8"></div>
<div class="a rais" style="left:931px;top:978px;width:101px;height:16px;background:#c4c4dc"></div>
<div class="a" id="selmode" style="left:937px;top:980px;font-size:11px;font-weight:bold;line-height:13px;white-space:nowrap">SELECTED MODE</div>
<div class="a rais" style="left:1035px;top:978px;width:36px;height:16px"></div>
<div class="a" id="auto" style="left:1039px;top:980px;font-size:11px;font-weight:bold;line-height:13px;white-space:nowrap">Auto</div>
<div class="a" style="left:1074px;top:978px;width:189px;height:16px;border:1px solid;border-color:#808080 #d8d8d8 #d8d8d8 #808080"></div>
<div class="a t12" id="cursor" style="left:1077px;top:980px;font-size:12.5px;word-spacing:1.5px">Cursor: -0.42533, -0.43249, -2.03707</div>
<svg class="a" style="left:1264px;top:979px" width="14" height="14"><g fill="#e8e8e0"><rect x="10" y="1" width="2" height="2"/><rect x="6" y="5" width="2" height="2"/><rect x="10" y="5" width="2" height="2"/><rect x="2" y="9" width="2" height="2"/><rect x="6" y="9" width="2" height="2"/><rect x="10" y="9" width="2" height="2"/></g><g fill="#808080"><rect x="11" y="2" width="2" height="2"/><rect x="7" y="6" width="2" height="2"/><rect x="11" y="6" width="2" height="2"/><rect x="3" y="10" width="2" height="2"/><rect x="7" y="10" width="2" height="2"/><rect x="11" y="10" width="2" height="2"/></g></svg>
<!-- taskbar -->
<div class="a" style="left:0;top:994px;width:1280px;height:30px;background:linear-gradient(to bottom,#3168d5 0%,#4993e6 4%,#3a83ea 10%,#2a6ee4 16%,#245fdb 24%,#2259d6 40%,#245edb 60%,#2663e0 85%,#2158d4 93%,#1b48b4 100%)"></div>
<!-- start button -->
<div class="a" style="left:0;top:994px;width:87px;height:30px;border-radius:0 12px 12px 0 / 0 15px 15px 0;background:radial-gradient(ellipse 70% 90% at 45% 55%,#4cb54c 0%,#3da03d 55%,#2f8a2f 85%,#27782a 100%);box-shadow:inset 0 2px 2px #6cc46c, inset -2px -2px 3px #1c5c20, 1px 0 2px #163a90"></div>
<svg class="a" style="left:10px;top:1000px" width="16" height="16" viewBox="0 0 16 16"><path d="M2.2 2.2 C4 1 5.5 1.2 7 2.2 L6 7.2 C4.5 6.2 3 6.2 1.2 7.2 Z" fill="#e8542c"/><path d="M8 2.6 C9.6 3.6 11.4 3.6 13.4 2.4 L12.4 7.6 C10.6 8.6 8.8 8.4 7 7.6 Z" fill="#7cc142"/><path d="M1 8.2 C2.8 7.2 4.4 7.4 5.8 8.2 L4.8 13.2 C3.4 12.4 1.8 12.4 0 13.4 Z" fill="#3a8ee8"/><path d="M6.8 8.8 C8.4 9.6 10.2 9.6 12.2 8.6 L11.2 13.8 C9.4 14.8 7.6 14.6 5.8 13.8 Z" fill="#f7c12c"/></svg>
<div class="a" id="pusk" style="left:26px;top:996px;font-size:20px;font-weight:bold;font-style:italic;color:#fff;line-height:24px;text-shadow:1px 1px 1px #1a4a1a;transform-origin:0 0;transform:scaleX(0.8);white-space:nowrap">пуск</div>
<!-- task buttons -->
<div class="task" style="left:97px;width:158px"><svg class="a" style="left:9px;top:3px" width="17" height="17" viewBox="0 0 17 17"><circle cx="8.5" cy="8.5" r="7.5" fill="#e8781c"/><circle cx="9.5" cy="7" r="4.2" fill="#3a6cc8"/><path d="M2 6 C4 2 7 3 8 5 C7 7 8 10 12 10 C11 14 5 15 2 11 Z" fill="#f08a20"/><path d="M3 4 L5 6 L3 7Z" fill="#c8400c"/></svg><span id="tk1">7249221.PNG (изобр…</span></div>
<div class="task" style="left:257px;width:158px"><svg class="a" style="left:9px;top:4px" width="16" height="16"><rect x="0" y="0" width="16" height="16" fill="#d8d8d8"/><rect x="0" y="0" width="16" height="5" fill="#f0f0f0"/><text x="8" y="13" font-family="Liberation Serif,serif" font-size="12" font-weight="bold" text-anchor="middle" fill="#505050">IV</text></svg><span id="tk2">OpenIV - vehicles.img…</span></div>
<div class="task" style="left:417px;width:158px"><svg class="a" style="left:10px;top:4px" width="16" height="16"><rect x="6" y="0" width="4" height="3" fill="#2a6a10"/><rect x="0.5" y="3.5" width="15" height="11" fill="#a8e050" stroke="#2a6a10"/><path d="M3 7.5 H7 M9 7.5 H13 M3 10.5 H7 M9 10.5 H13" stroke="#2a6a10" stroke-width="1.3"/></svg><span id="tk3">[405-556-640] - Окн…</span></div>
<div class="task active" style="left:577px;width:158px"><svg class="a" style="left:10px;top:3px" width="17" height="17" viewBox="0 0 17 17"><rect x="0" y="0" width="16" height="16" fill="#f09a18"/><path d="M3.5 3.5 H12.5 L5 11.5 H13" fill="none" stroke="#3a2a78" stroke-width="2.4"/></svg><span id="tk4" style="left:29px">201 доделал - ZMod…</span></div>
<div class="task" style="left:737px;width:158px"><svg class="a" style="left:10px;top:3px" width="17" height="17"><circle cx="8.5" cy="8.5" r="8" fill="#30b8f0"/><circle cx="6" cy="5.5" r="4.5" fill="#30b8f0"/><circle cx="11.5" cy="11.5" r="4.5" fill="#30b8f0"/><text x="8.5" y="13" font-family="Liberation Sans,sans-serif" font-size="12" font-weight="bold" text-anchor="middle" fill="#fff">S</text></svg><span id="tk5" style="left:29px">Skype™ - b.a.r.0.n</span></div>
<!-- media player toolbar -->
<div class="a" style="left:910px;top:997px;width:170px;height:25px;background:#0c0c0c;border:1px solid #404858;border-radius:3px"></div>
<svg class="a" style="left:910px;top:997px" width="170" height="25" viewBox="0 0 170 25">
<circle cx="13" cy="12.5" r="7.5" fill="#e8eef8"/><circle cx="13" cy="12.5" r="6" fill="#2a66d8"/><path d="M10.5 8.5 L17 12.5 L10.5 16.5Z" fill="#fff"/><path d="M7 9 A7 7 0 0 1 19 9" stroke="#f08020" stroke-width="1.6" fill="none"/><path d="M7 16 A7 7 0 0 0 19 16" stroke="#60b030" stroke-width="1.6" fill="none"/>
<rect x="25.500" y="3.500" width="130" height="18" rx="9" fill="#1c1c1c" stroke="#5c5c5c"/>
<rect x="36" y="9" width="7" height="7" fill="#fff"/>
<rect x="49.500" y="5.500" width="26" height="14" rx="7" fill="#2a2a2a" stroke="#6c6c6c"/><path d="M58 8.500 V16.500 M66 8.500 L60 12.500 L66 16.500Z" stroke="#fff" stroke-width="1.500" fill="#fff"/>
<rect x="95.500" y="5.500" width="26" height="14" rx="7" fill="#2a2a2a" stroke="#6c6c6c"/><path d="M113 8.500 V16.500 M105 8.500 L111 12.500 L105 16.500Z" stroke="#fff" stroke-width="1.500" fill="#fff"/>
<circle cx="85" cy="12.500" r="11" fill="#484848" stroke="#d0d0d0" stroke-width="1.500"/><rect x="80.500" y="7.500" width="3" height="10" fill="#fff"/><rect x="86.500" y="7.500" width="3" height="10" fill="#fff"/>
<path d="M126 10.500 H128.500 L132 7.500 V17.500 L128.500 14.500 H126Z" fill="#fff"/><path d="M134 9.500 Q136 12.500 134 15.500 M136.500 8 Q139.500 12.500 136.500 17" stroke="#d0d0d0" fill="none" stroke-width="1.200"/><path d="M141 11 H148 L144.500 15Z" fill="#fff"/>
<path d="M161 7 L164 3.500 L167 7 M161 8.500 L164 12 L167 8.500" fill="none" stroke="#fff" stroke-width="1.300"/><rect x="160.500" y="16.500" width="5" height="5" fill="none" stroke="#fff" stroke-width="1.300"/><path d="M163 15.500 H167.500 V20" fill="none" stroke="#fff" stroke-width="1.300"/>
</svg>
<!-- language -->
<div class="a" style="left:1089px;top:1001px;width:13px;height:16px;background:#3a6edc"></div>
<div class="a t11" style="left:1089px;top:1003px;color:#fff">RL</div>
<!-- tray -->
<div class="a" style="left:1115px;top:994px;width:165px;height:30px;background:linear-gradient(to bottom,#0c5fcb 0%,#19b9f3 5%,#18a3ee 12%,#1290e8 22%,#0d86e4 45%,#0f8de8 75%,#0d7fdc 90%,#0a5fbe 100%);box-shadow:inset 1px 0 0 #0a3ca0, inset 2px 0 1px #35a8f4"></div>
<div class="a" style="left:1106px;top:1000px;width:19px;height:19px;border-radius:10px;background:radial-gradient(circle at 40% 35%,#6cb4ff 0%,#2a7ef0 55%,#1550c8 100%);border:1px solid #dcecff"><svg class="a" style="left:0;top:0" width="17" height="17"><path d="M10.500 4.500 L6.500 8.500 L10.500 12.500" fill="none" stroke="#fff" stroke-width="2.400"/></svg></div>
<svg class="a" style="left:1126px;top:1000px" width="112" height="18" viewBox="0 0 112 18">
<rect x="0" y="0" width="16" height="16" fill="#000"/><text x="1" y="12" font-family="Liberation Sans,sans-serif" font-size="12" font-weight="bold" font-style="italic" fill="#fff">R</text><path d="M11.500 9 L12.500 11.500 L15 11.500 L13 13 L13.800 15.500 L11.500 14 L9.200 15.500 L10 13 L8 11.500 L10.500 11.500Z" fill="#fff"/>
<path d="M20 4 Q27 -1 34 4 Q36 9 33 13 Q30 15 28 17 Q27 15 23 14 Q18 10 20 4Z" fill="#58c830"/><path d="M23 8 L26.500 11.500 L32 5" fill="none" stroke="#fff" stroke-width="2.200"/>
<g fill="#8cc820"><circle cx="45" cy="4" r="3"/><circle cx="40" cy="8" r="3"/><circle cx="50" cy="8" r="3"/><circle cx="42" cy="13" r="3"/><circle cx="48" cy="13" r="3"/></g><circle cx="45" cy="9" r="4" fill="#f8e020"/><path d="M43 10 Q45 12 47 10" stroke="#604000" fill="none"/><circle cx="43.500" cy="8" r="0.700" fill="#604000"/><circle cx="46.500" cy="8" r="0.700" fill="#604000"/>
<g><rect x="61" y="2" width="9" height="8" fill="#6a7078"/><rect x="55" y="5" width="10" height="8" fill="#8a9098"/><rect x="57" y="14" width="6" height="1.500" fill="#5a6068"/></g>
<path d="M74 1 H79 L79 8 L85 1 H90 L78 16 H74Z" fill="#e8182c" stroke="#fff" stroke-width="0.800"/><rect x="82" y="10" width="7" height="6" fill="#101010" stroke="#fff" stroke-width="0.800"/>
<g><rect x="98" y="2" width="9" height="8" fill="#6a7078"/><rect x="92" y="5" width="10" height="8" fill="#8a9098"/><rect x="94" y="14" width="6" height="1.500" fill="#5a6068"/></g>
</svg>
<div class="a t11" id="clock" style="left:1239px;top:1003px;color:#fff">18:05</div>
</body>
</html>
